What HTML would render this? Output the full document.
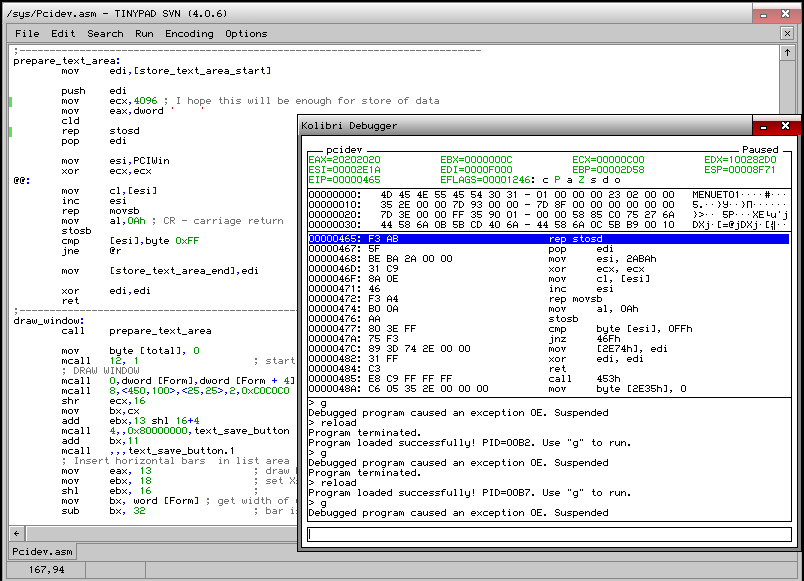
<!DOCTYPE html>
<html><head><meta charset="utf-8">
<style>
*{margin:0;padding:0}
html,body{width:804px;height:581px;overflow:hidden;background:#000}
body{position:relative}
.a{position:absolute}
.tx{position:absolute;white-space:pre;font-family:"Liberation Mono",monospace;font-size:10px;line-height:10px;color:transparent}
</style></head><body>
<div class="a" style="left:2px;top:2px;width:800px;height:579px;background:#c8c8c8"></div><div class="a" style="left:2px;top:2px;width:800px;height:1px;background:#8c8c8c"></div><div class="a" style="left:2px;top:2px;width:1px;height:579px;background:#9a9a9a"></div><div class="a" style="left:801px;top:2px;width:1px;height:579px;background:#a8a8a8"></div><div class="a" style="left:3px;top:3px;width:798px;height:1px;background:#ffffff"></div><div class="a" style="left:3px;top:3px;width:1px;height:578px;background:#d8d8d8"></div><div class="a" style="left:3px;top:4px;width:1px;height:19px;background:linear-gradient(#ffffff,#d4d4d4)"></div><div class="a" style="left:4px;top:4px;width:748px;height:19px;background:linear-gradient(#f4f4f4,#c2c2c2)"></div><div class="a" style="left:752px;top:3px;width:1px;height:20px;background:#888888"></div><div class="a" style="left:753px;top:4px;width:48px;height:5px;background:linear-gradient(#ffffff,#e8d4d4)"></div><div class="a" style="left:753px;top:9px;width:48px;height:14px;background:linear-gradient(#b87878,#e07e7e)"></div><div class="a" style="left:801px;top:2px;width:1px;height:21px;background:#7c7c7c"></div><div class="a" style="left:800px;top:3px;width:1px;height:6px;background:#f8f0f0"></div><div class="a" style="left:6px;top:23px;width:795px;height:1px;background:#888888"></div><div class="a" style="left:2px;top:23px;width:4px;height:1px;background:#c4c4c4"></div><div class="a" style="left:6px;top:23px;width:792px;height:1px;background:#888888"></div><div class="a" style="left:6px;top:42px;width:792px;height:1px;background:#888888"></div><div class="a" style="left:6px;top:23px;width:1px;height:20px;background:#888888"></div><div class="a" style="left:797px;top:23px;width:1px;height:20px;background:#888888"></div><div class="a" style="left:780px;top:26px;width:14px;height:1px;background:#888888"></div><div class="a" style="left:780px;top:39px;width:14px;height:1px;background:#888888"></div><div class="a" style="left:780px;top:26px;width:1px;height:14px;background:#888888"></div><div class="a" style="left:793px;top:26px;width:1px;height:14px;background:#888888"></div><div class="a" style="left:781px;top:27px;width:12px;height:1px;background:#ffffff"></div><div class="a" style="left:781px;top:27px;width:1px;height:12px;background:#ffffff"></div><div class="a" style="left:6px;top:42px;width:792px;height:1px;background:#888888"></div><div class="a" style="left:6px;top:561px;width:792px;height:1px;background:#888888"></div><div class="a" style="left:6px;top:42px;width:1px;height:520px;background:#888888"></div><div class="a" style="left:797px;top:42px;width:1px;height:520px;background:#888888"></div><div class="a" style="left:8px;top:44px;width:788px;height:1px;background:#888888"></div><div class="a" style="left:8px;top:44px;width:1px;height:516px;background:#888888"></div><div class="a" style="left:795px;top:44px;width:1px;height:498px;background:#888888"></div><div class="a" style="left:9px;top:45px;width:770px;height:480px;background:#ffffff"></div><div class="a" style="left:9px;top:97px;width:3px;height:10px;background:#5ee05e"></div><div class="a" style="left:9px;top:127px;width:3px;height:10px;background:#5ee05e"></div><div class="a" style="left:779px;top:45px;width:1px;height:480px;background:#888888"></div><div class="a" style="left:780px;top:45px;width:15px;height:1px;background:#ffffff"></div><div class="a" style="left:780px;top:45px;width:1px;height:15px;background:#ffffff"></div><div class="a" style="left:780px;top:60px;width:15px;height:1px;background:#888888"></div><div class="a" style="left:9px;top:525px;width:786px;height:1px;background:#888888"></div><div class="a" style="left:9px;top:526px;width:15px;height:1px;background:#ffffff"></div><div class="a" style="left:9px;top:526px;width:1px;height:15px;background:#ffffff"></div><div class="a" style="left:24px;top:526px;width:2px;height:15px;background:#888888"></div><div class="a" style="left:26px;top:526px;width:753px;height:1px;background:#ffffff"></div><div class="a" style="left:26px;top:526px;width:1px;height:15px;background:#ffffff"></div><div class="a" style="left:9px;top:541px;width:787px;height:1px;background:#888888"></div><div class="a" style="left:76px;top:543px;width:722px;height:1px;background:#888888"></div><div class="a" style="left:76px;top:543px;width:1px;height:17px;background:#888888"></div><div class="a" style="left:8px;top:559px;width:69px;height:1px;background:#888888"></div><div class="a" style="left:6px;top:561px;width:792px;height:1px;background:#888888"></div><div class="a" style="left:6px;top:578px;width:792px;height:1px;background:#888888"></div><div class="a" style="left:6px;top:561px;width:1px;height:18px;background:#888888"></div><div class="a" style="left:797px;top:561px;width:1px;height:18px;background:#888888"></div><div class="a" style="left:85px;top:561px;width:1px;height:18px;background:#888888"></div><div class="a" style="left:145px;top:561px;width:1px;height:18px;background:#888888"></div><svg class="a" style="left:0;top:0" width="804" height="581" shape-rendering="crispEdges"><path fill="#5e6a6a" d="M781 9h4v1h-4zM786 9h4v1h-4zM781 10h1v1h-1zM784 10h1v1h-1zM786 10h1v1h-1zM789 10h1v1h-1zM781 11h1v1h-1zM785 11h1v1h-1zM789 11h1v1h-1zM781 12h2v1h-2zM788 12h2v1h-2zM782 13h2v1h-2zM787 13h2v1h-2zM781 14h2v1h-2zM788 14h2v1h-2zM781 15h1v1h-1zM785 15h1v1h-1zM789 15h1v1h-1zM781 16h1v1h-1zM784 16h1v1h-1zM786 16h1v1h-1zM789 16h1v1h-1zM781 17h4v1h-4zM786 17h4v1h-4z"/><path fill="#ffffff" d="M782 10h2v1h-2zM787 10h2v1h-2zM782 11h3v1h-3zM786 11h3v1h-3zM783 12h5v1h-5zM784 13h3v1h-3zM783 14h5v1h-5zM782 15h3v1h-3zM786 15h3v1h-3zM782 16h2v1h-2zM787 16h2v1h-2z"/><path fill="#5e6a6a" d="M760 14h7v1h-7zM760 15h1v1h-1zM766 15h1v1h-1zM760 16h1v1h-1zM766 16h1v1h-1zM760 17h7v1h-7z"/><path fill="#ffffff" d="M761 15h5v1h-5zM761 16h5v1h-5z"/><path fill="#000" d="M785 31h1v1h-1zM789 31h1v1h-1zM786 32h1v1h-1zM788 32h1v1h-1zM787 33h1v1h-1zM786 34h1v1h-1zM788 34h1v1h-1zM785 35h1v1h-1zM789 35h1v1h-1z"/><path fill="#000" d="M787 49h1v1h-1zM786 50h3v1h-3zM785 51h1v1h-1zM787 51h1v1h-1zM789 51h1v1h-1zM787 52h1v1h-1zM787 53h1v1h-1zM787 54h1v1h-1zM787 55h1v1h-1z"/><path fill="#000" d="M16 531h1v1h-1zM15 532h1v1h-1zM14 533h5v1h-5zM15 534h1v1h-1zM16 535h1v1h-1z"/></svg>
<div class="tx" style="left:7px;top:9px">/sys/Pcidev.asm - TINYPAD SVN (4.0.6)</div><div class="tx" style="left:16px;top:29px">File  Edit  Search  Run  Encoding  Options</div><div class="tx" style="left:14px;top:46px">;-----------------------------------------------------------------------------
prepare_text_area:
        mov     edi,[store_text_area_start]

        push    edi
        mov     ecx,4096 ; I hope this will be enough for store of data
        mov     eax,dword '    '
        cld
        rep     stosd
        pop     edi

        mov     esi,PCIWin
        xor     ecx,ecx
@@:
        mov     cl,[esi]
        inc     esi
        rep     movsb
        mov     al,0Ah ; CR - carriage return
        stosb
        cmp     [esi],byte 0xFF
        jne     @r

        mov     [store_text_area_end],edi

        xor     edi,edi
        ret
;-----------------------------------------------------------------------------
draw_window:
        call    prepare_text_area

        mov     byte [total], 0
        mcall   12, 1                   ; start
        ; DRAW WINDOW
        mcall   0,dword [Form],dword [Form + 4]
        mcall   8,&lt;450,100&gt;,&lt;25,25&gt;,2,0xC0C0C0
        shr     ecx,16
        mov     bx,cx
        add     ebx,13 shl 16+4
        mcall   4,,0x80000000,text_save_button
        add     bx,11
        mcall   ,,,text_save_button.1
        ; Insert horizontal bars  in list area
        mov     eax, 13                 ; draw b
        mov     ebx, 18                 ; set Xs
        shl     ebx, 16                 ;
        mov     bx, word [Form] ; get width of w
        sub     bx, 32                  ; bar is</div><div class="tx" style="left:13px;top:547px">Pcidev.asm</div><div class="tx" style="left:29px;top:565px">167,94</div><svg class="a" style="left:0;top:0" width="804" height="581" shape-rendering="crispEdges"><defs><path id="g0" d="M4 0h1v1h-1zM3 1h1v1h-1zM3 2h1v1h-1zM2 3h1v1h-1zM1 4h1v1h-1zM1 5h1v1h-1zM0 6h1v1h-1z"/><path id="g1" d="M1 2h4v1h-4zM0 3h1v1h-1zM1 4h3v1h-3zM4 5h1v1h-1zM0 6h4v1h-4z"/><path id="g2" d="M0 2h1v1h-1zM4 2h1v1h-1zM0 3h1v1h-1zM4 3h1v1h-1zM0 4h1v1h-1zM4 4h1v1h-1zM0 5h1v1h-1zM4 5h1v1h-1zM1 6h4v1h-4zM4 7h1v1h-1zM1 8h3v1h-3z"/><path id="g3" d="M0 0h4v1h-4zM0 1h1v1h-1zM4 1h1v1h-1zM0 2h1v1h-1zM4 2h1v1h-1zM0 3h4v1h-4zM0 4h1v1h-1zM0 5h1v1h-1zM0 6h1v1h-1z"/><path id="g4" d="M1 2h4v1h-4zM0 3h1v1h-1zM0 4h1v1h-1zM0 5h1v1h-1zM1 6h4v1h-4z"/><path id="g5" d="M2 0h1v1h-1zM1 2h2v1h-2zM2 3h1v1h-1zM2 4h1v1h-1zM2 5h1v1h-1zM1 6h3v1h-3z"/><path id="g6" d="M4 0h1v1h-1zM4 1h1v1h-1zM1 2h4v1h-4zM0 3h1v1h-1zM4 3h1v1h-1zM0 4h1v1h-1zM4 4h1v1h-1zM0 5h1v1h-1zM4 5h1v1h-1zM1 6h4v1h-4z"/><path id="g7" d="M1 2h3v1h-3zM0 3h1v1h-1zM4 3h1v1h-1zM0 4h5v1h-5zM0 5h1v1h-1zM1 6h3v1h-3z"/><path id="g8" d="M0 2h2v1h-2zM3 2h2v1h-2zM1 3h1v1h-1zM3 3h1v1h-1zM1 4h1v1h-1zM3 4h1v1h-1zM2 5h1v1h-1zM2 6h1v1h-1z"/><path id="g9" d="M1 5h2v1h-2zM1 6h2v1h-2z"/><path id="g10" d="M1 2h3v1h-3zM4 3h1v1h-1zM1 4h4v1h-4zM0 5h1v1h-1zM4 5h1v1h-1zM1 6h4v1h-4z"/><path id="g11" d="M0 2h2v1h-2zM3 2h1v1h-1zM0 3h1v1h-1zM2 3h1v1h-1zM4 3h1v1h-1zM0 4h1v1h-1zM2 4h1v1h-1zM4 4h1v1h-1zM0 5h1v1h-1zM2 5h1v1h-1zM4 5h1v1h-1zM0 6h1v1h-1zM4 6h1v1h-1z"/><path id="g12" d="M0 3h5v1h-5z"/><path id="g13" d="M0 0h5v1h-5zM2 1h1v1h-1zM2 2h1v1h-1zM2 3h1v1h-1zM2 4h1v1h-1zM2 5h1v1h-1zM2 6h1v1h-1z"/><path id="g14" d="M1 0h3v1h-3zM2 1h1v1h-1zM2 2h1v1h-1zM2 3h1v1h-1zM2 4h1v1h-1zM2 5h1v1h-1zM1 6h3v1h-3z"/><path id="g15" d="M0 0h1v1h-1zM4 0h1v1h-1zM0 1h2v1h-2zM4 1h1v1h-1zM0 2h2v1h-2zM4 2h1v1h-1zM0 3h1v1h-1zM2 3h1v1h-1zM4 3h1v1h-1zM0 4h1v1h-1zM3 4h2v1h-2zM0 5h1v1h-1zM3 5h2v1h-2zM0 6h1v1h-1zM4 6h1v1h-1z"/><path id="g16" d="M0 0h1v1h-1zM4 0h1v1h-1zM0 1h1v1h-1zM4 1h1v1h-1zM1 2h1v1h-1zM3 2h1v1h-1zM2 3h1v1h-1zM2 4h1v1h-1zM2 5h1v1h-1zM2 6h1v1h-1z"/><path id="g17" d="M2 0h1v1h-1zM1 1h1v1h-1zM3 1h1v1h-1zM0 2h1v1h-1zM4 2h1v1h-1zM0 3h1v1h-1zM4 3h1v1h-1zM0 4h5v1h-5zM0 5h1v1h-1zM4 5h1v1h-1zM0 6h1v1h-1zM4 6h1v1h-1z"/><path id="g18" d="M0 0h3v1h-3zM0 1h1v1h-1zM3 1h1v1h-1zM0 2h1v1h-1zM4 2h1v1h-1zM0 3h1v1h-1zM4 3h1v1h-1zM0 4h1v1h-1zM4 4h1v1h-1zM0 5h1v1h-1zM3 5h1v1h-1zM0 6h3v1h-3z"/><path id="g19" d="M1 0h3v1h-3zM0 1h1v1h-1zM4 1h1v1h-1zM0 2h1v1h-1zM1 3h3v1h-3zM4 4h1v1h-1zM0 5h1v1h-1zM4 5h1v1h-1zM1 6h3v1h-3z"/><path id="g20" d="M0 0h1v1h-1zM4 0h1v1h-1zM0 1h1v1h-1zM4 1h1v1h-1zM1 2h1v1h-1zM3 2h1v1h-1zM1 3h1v1h-1zM3 3h1v1h-1zM1 4h1v1h-1zM3 4h1v1h-1zM2 5h1v1h-1zM2 6h1v1h-1z"/><path id="g21" d="M3 0h1v1h-1zM2 1h1v1h-1zM2 2h1v1h-1zM2 3h1v1h-1zM2 4h1v1h-1zM2 5h1v1h-1zM3 6h1v1h-1z"/><path id="g22" d="M3 0h1v1h-1zM2 1h2v1h-2zM1 2h1v1h-1zM3 2h1v1h-1zM1 3h1v1h-1zM3 3h1v1h-1zM0 4h5v1h-5zM3 5h1v1h-1zM2 6h3v1h-3z"/><path id="g23" d="M1 0h3v1h-3zM0 1h1v1h-1zM4 1h1v1h-1zM0 2h1v1h-1zM4 2h1v1h-1zM0 3h1v1h-1zM4 3h1v1h-1zM0 4h1v1h-1zM4 4h1v1h-1zM0 5h1v1h-1zM4 5h1v1h-1zM1 6h3v1h-3z"/><path id="g24" d="M2 0h2v1h-2zM1 1h1v1h-1zM0 2h1v1h-1zM0 3h4v1h-4zM0 4h1v1h-1zM4 4h1v1h-1zM0 5h1v1h-1zM4 5h1v1h-1zM1 6h3v1h-3z"/><path id="g25" d="M1 0h1v1h-1zM2 1h1v1h-1zM2 2h1v1h-1zM2 3h1v1h-1zM2 4h1v1h-1zM2 5h1v1h-1zM1 6h1v1h-1z"/><path id="g26" d="M0 0h5v1h-5zM0 1h1v1h-1zM0 2h1v1h-1zM0 3h4v1h-4zM0 4h1v1h-1zM0 5h1v1h-1zM0 6h1v1h-1z"/><path id="g27" d="M1 0h2v1h-2zM2 1h1v1h-1zM2 2h1v1h-1zM2 3h1v1h-1zM2 4h1v1h-1zM2 5h1v1h-1zM1 6h3v1h-3z"/><path id="g28" d="M0 0h5v1h-5zM0 1h1v1h-1zM0 2h1v1h-1zM0 3h4v1h-4zM0 4h1v1h-1zM0 5h1v1h-1zM0 6h5v1h-5z"/><path id="g29" d="M2 0h1v1h-1zM2 1h1v1h-1zM1 2h3v1h-3zM2 3h1v1h-1zM2 4h1v1h-1zM2 5h1v1h-1zM3 6h2v1h-2z"/><path id="g30" d="M1 2h1v1h-1zM3 2h2v1h-2zM1 3h2v1h-2zM1 4h1v1h-1zM1 5h1v1h-1zM1 6h1v1h-1z"/><path id="g31" d="M0 0h1v1h-1zM0 1h1v1h-1zM0 2h4v1h-4zM0 3h1v1h-1zM4 3h1v1h-1zM0 4h1v1h-1zM4 4h1v1h-1zM0 5h1v1h-1zM4 5h1v1h-1zM0 6h1v1h-1zM4 6h1v1h-1z"/><path id="g32" d="M0 0h4v1h-4zM0 1h1v1h-1zM4 1h1v1h-1zM0 2h1v1h-1zM4 2h1v1h-1zM0 3h4v1h-4zM0 4h1v1h-1zM2 4h1v1h-1zM0 5h1v1h-1zM3 5h1v1h-1zM0 6h1v1h-1zM4 6h1v1h-1z"/><path id="g33" d="M0 2h1v1h-1zM4 2h1v1h-1zM0 3h1v1h-1zM4 3h1v1h-1zM0 4h1v1h-1zM4 4h1v1h-1zM0 5h1v1h-1zM3 5h2v1h-2zM1 6h2v1h-2zM4 6h1v1h-1z"/><path id="g34" d="M0 2h1v1h-1zM2 2h2v1h-2zM0 3h2v1h-2zM4 3h1v1h-1zM0 4h1v1h-1zM4 4h1v1h-1zM0 5h1v1h-1zM4 5h1v1h-1zM0 6h1v1h-1zM4 6h1v1h-1z"/><path id="g35" d="M1 2h3v1h-3zM0 3h1v1h-1zM4 3h1v1h-1zM0 4h1v1h-1zM4 4h1v1h-1zM0 5h1v1h-1zM4 5h1v1h-1zM1 6h3v1h-3z"/><path id="g36" d="M1 2h4v1h-4zM0 3h1v1h-1zM4 3h1v1h-1zM0 4h1v1h-1zM4 4h1v1h-1zM0 5h1v1h-1zM4 5h1v1h-1zM1 6h4v1h-4zM4 7h1v1h-1zM1 8h3v1h-3z"/><path id="g37" d="M1 0h3v1h-3zM0 1h1v1h-1zM4 1h1v1h-1zM0 2h1v1h-1zM4 2h1v1h-1zM0 3h1v1h-1zM4 3h1v1h-1zM0 4h1v1h-1zM4 4h1v1h-1zM0 5h1v1h-1zM4 5h1v1h-1zM1 6h3v1h-3z"/><path id="g38" d="M0 2h4v1h-4zM0 3h1v1h-1zM4 3h1v1h-1zM0 4h1v1h-1zM4 4h1v1h-1zM0 5h1v1h-1zM4 5h1v1h-1zM0 6h4v1h-4zM0 7h1v1h-1zM0 8h1v1h-1z"/><path id="g39" d="M1 1h2v1h-2zM1 2h2v1h-2zM1 5h2v1h-2zM2 6h1v1h-1zM1 7h1v1h-1z"/><path id="g40" d="M0 7h5v1h-5z"/><path id="g41" d="M0 2h1v1h-1zM4 2h1v1h-1zM1 3h1v1h-1zM3 3h1v1h-1zM2 4h1v1h-1zM1 5h1v1h-1zM3 5h1v1h-1zM0 6h1v1h-1zM4 6h1v1h-1z"/><path id="g42" d="M1 1h2v1h-2zM1 2h2v1h-2zM1 5h2v1h-2zM1 6h2v1h-2z"/><path id="g43" d="M1 5h2v1h-2zM2 6h1v1h-1zM1 7h1v1h-1z"/><path id="g44" d="M1 0h3v1h-3zM1 1h1v1h-1zM1 2h1v1h-1zM1 3h1v1h-1zM1 4h1v1h-1zM1 5h1v1h-1zM1 6h3v1h-3z"/><path id="g45" d="M1 0h3v1h-3zM3 1h1v1h-1zM3 2h1v1h-1zM3 3h1v1h-1zM3 4h1v1h-1zM3 5h1v1h-1zM1 6h3v1h-3z"/><path id="g46" d="M1 0h3v1h-3zM0 1h1v1h-1zM4 1h1v1h-1zM0 2h1v1h-1zM4 2h1v1h-1zM1 3h4v1h-4zM4 4h1v1h-1zM3 5h1v1h-1zM1 6h2v1h-2z"/><path id="g47" d="M0 2h1v1h-1zM4 2h1v1h-1zM0 3h1v1h-1zM2 3h1v1h-1zM4 3h1v1h-1zM0 4h1v1h-1zM2 4h1v1h-1zM4 4h1v1h-1zM0 5h1v1h-1zM2 5h1v1h-1zM4 5h1v1h-1zM1 6h1v1h-1zM3 6h1v1h-1z"/><path id="g48" d="M0 0h1v1h-1zM0 1h1v1h-1zM0 2h4v1h-4zM0 3h1v1h-1zM4 3h1v1h-1zM0 4h1v1h-1zM4 4h1v1h-1zM0 5h1v1h-1zM4 5h1v1h-1zM0 6h4v1h-4z"/><path id="g49" d="M2 0h3v1h-3zM1 1h1v1h-1zM0 2h4v1h-4zM1 3h1v1h-1zM1 4h1v1h-1zM1 5h1v1h-1zM1 6h1v1h-1z"/><path id="g50" d="M2 0h1v1h-1zM2 1h1v1h-1z"/><path id="g51" d="M1 0h3v1h-3zM0 1h1v1h-1zM4 1h1v1h-1zM0 2h1v1h-1zM0 3h1v1h-1zM0 4h1v1h-1zM0 5h1v1h-1zM4 5h1v1h-1zM1 6h3v1h-3z"/><path id="g52" d="M0 0h1v1h-1zM4 0h1v1h-1zM0 1h1v1h-1zM4 1h1v1h-1zM0 2h1v1h-1zM4 2h1v1h-1zM0 3h1v1h-1zM2 3h1v1h-1zM4 3h1v1h-1zM0 4h1v1h-1zM2 4h1v1h-1zM4 4h1v1h-1zM0 5h1v1h-1zM2 5h1v1h-1zM4 5h1v1h-1zM1 6h1v1h-1zM3 6h1v1h-1z"/><path id="g53" d="M1 0h3v1h-3zM0 1h1v1h-1zM4 1h1v1h-1zM0 2h1v1h-1zM2 2h3v1h-3zM0 3h1v1h-1zM2 3h2v1h-2zM0 4h1v1h-1zM2 4h2v1h-2zM0 5h1v1h-1zM1 6h3v1h-3z"/><path id="g54" d="M3 0h1v1h-1zM2 2h2v1h-2zM3 3h1v1h-1zM3 4h1v1h-1zM3 5h1v1h-1zM3 6h1v1h-1zM3 7h1v1h-1zM0 8h3v1h-3z"/><path id="g55" d="M2 0h1v1h-1zM1 1h2v1h-2zM2 2h1v1h-1zM2 3h1v1h-1zM2 4h1v1h-1zM2 5h1v1h-1zM2 6h1v1h-1z"/><path id="g56" d="M1 0h3v1h-3zM0 1h1v1h-1zM4 1h1v1h-1zM4 2h1v1h-1zM1 3h3v1h-3zM0 4h1v1h-1zM0 5h1v1h-1zM0 6h5v1h-5z"/><path id="g57" d="M2 1h1v1h-1zM2 2h1v1h-1zM0 3h5v1h-5zM2 4h1v1h-1zM2 5h1v1h-1z"/><path id="g58" d="M1 0h3v1h-3zM0 1h1v1h-1zM4 1h1v1h-1zM0 2h1v1h-1zM4 2h1v1h-1zM1 3h3v1h-3zM0 4h1v1h-1zM4 4h1v1h-1zM0 5h1v1h-1zM4 5h1v1h-1zM1 6h3v1h-3z"/><path id="g59" d="M3 1h2v1h-2zM1 2h2v1h-2zM0 3h1v1h-1zM1 4h2v1h-2zM3 5h2v1h-2z"/><path id="g60" d="M0 0h5v1h-5zM0 1h1v1h-1zM0 2h1v1h-1zM0 3h4v1h-4zM4 4h1v1h-1zM0 5h1v1h-1zM4 5h1v1h-1zM1 6h3v1h-3z"/><path id="g61" d="M0 1h2v1h-2zM2 2h2v1h-2zM4 3h1v1h-1zM2 4h2v1h-2zM0 5h2v1h-2z"/><path id="g62" d="M1 0h3v1h-3zM0 1h1v1h-1zM4 1h1v1h-1zM4 2h1v1h-1zM2 3h2v1h-2zM4 4h1v1h-1zM0 5h1v1h-1zM4 5h1v1h-1zM1 6h3v1h-3z"/><path id="g63" d="M0 2h5v1h-5zM3 3h1v1h-1zM2 4h1v1h-1zM1 5h1v1h-1zM0 6h5v1h-5z"/><path id="g64" d="M0 0h1v1h-1zM4 0h1v1h-1zM0 1h1v1h-1zM4 1h1v1h-1zM1 2h1v1h-1zM3 2h1v1h-1zM2 3h1v1h-1zM1 4h1v1h-1zM3 4h1v1h-1zM0 5h1v1h-1zM4 5h1v1h-1zM0 6h1v1h-1zM4 6h1v1h-1z"/><path id="g65" d="M0 0h5v1h-5zM4 1h1v1h-1zM3 2h1v1h-1zM2 3h1v1h-1zM1 4h1v1h-1zM1 5h1v1h-1zM1 6h1v1h-1z"/><path id="g66" d="M0 0h1v1h-1zM4 0h1v1h-1zM0 1h1v1h-1zM3 1h1v1h-1zM0 2h1v1h-1zM2 2h1v1h-1zM0 3h2v1h-2zM0 4h1v1h-1zM2 4h1v1h-1zM0 5h1v1h-1zM3 5h1v1h-1zM0 6h1v1h-1zM4 6h1v1h-1z"/><path id="g67" d="M0 2h5v1h-5zM0 4h5v1h-5z"/><path id="g68" d="M0 0h4v1h-4zM0 1h1v1h-1zM4 1h1v1h-1zM0 2h1v1h-1zM4 2h1v1h-1zM0 3h4v1h-4zM0 4h1v1h-1zM4 4h1v1h-1zM0 5h1v1h-1zM4 5h1v1h-1zM0 6h4v1h-4z"/><path id="g69" d="M0 0h1v1h-1zM0 1h1v1h-1zM0 2h1v1h-1zM0 3h1v1h-1zM0 4h1v1h-1zM0 5h1v1h-1zM0 6h5v1h-5z"/><path id="g70" d="M1 0h3v1h-3zM0 1h1v1h-1zM4 1h1v1h-1zM0 2h1v1h-1zM0 3h1v1h-1zM2 3h3v1h-3zM0 4h1v1h-1zM4 4h1v1h-1zM0 5h1v1h-1zM4 5h1v1h-1zM1 6h4v1h-4z"/><path id="g71" d="M0 0h5v1h-5zM4 1h1v1h-1zM3 2h1v1h-1zM2 3h1v1h-1zM1 4h1v1h-1zM0 5h1v1h-1zM0 6h5v1h-5z"/><path id="g72" d="M0 0h1v1h-1zM4 0h1v1h-1zM0 1h2v1h-2zM3 1h2v1h-2zM0 2h1v1h-1zM2 2h1v1h-1zM4 2h1v1h-1zM0 3h1v1h-1zM2 3h1v1h-1zM4 3h1v1h-1zM0 4h1v1h-1zM4 4h1v1h-1zM0 5h1v1h-1zM4 5h1v1h-1zM0 6h1v1h-1zM4 6h1v1h-1z"/><path id="g73" d="M0 0h1v1h-1zM4 0h1v1h-1zM0 1h1v1h-1zM4 1h1v1h-1zM0 2h1v1h-1zM4 2h1v1h-1zM0 3h1v1h-1zM4 3h1v1h-1zM0 4h1v1h-1zM4 4h1v1h-1zM0 5h1v1h-1zM4 5h1v1h-1zM1 6h3v1h-3z"/><path id="g74" d="M1 3h1v1h-1z"/><path id="g75" d="M1 0h1v1h-1zM3 0h1v1h-1zM1 1h1v1h-1zM3 1h1v1h-1zM0 2h5v1h-5zM1 3h1v1h-1zM3 3h1v1h-1zM0 4h5v1h-5zM1 5h1v1h-1zM3 5h1v1h-1zM1 6h1v1h-1zM3 6h1v1h-1z"/><path id="g76" d="M1 0h1v1h-1zM2 1h1v1h-1zM2 2h1v1h-1zM3 3h1v1h-1zM2 4h1v1h-1zM2 5h1v1h-1zM1 6h1v1h-1z"/><path id="g77" d="M0 0h1v1h-1zM4 0h1v1h-1zM0 1h1v1h-1zM4 1h1v1h-1zM0 2h1v1h-1zM4 2h1v1h-1zM1 3h4v1h-4zM4 4h1v1h-1zM0 5h1v1h-1zM4 5h1v1h-1zM1 6h3v1h-3z"/><path id="g78" d="M0 0h5v1h-5zM0 1h1v1h-1zM4 1h1v1h-1zM0 2h1v1h-1zM4 2h1v1h-1zM0 3h1v1h-1zM4 3h1v1h-1zM0 4h1v1h-1zM4 4h1v1h-1zM0 5h1v1h-1zM4 5h1v1h-1zM0 6h1v1h-1zM4 6h1v1h-1z"/><path id="g79" d="M0 0h4v1h-4zM0 1h1v1h-1zM4 1h1v1h-1zM0 2h1v1h-1zM4 2h1v1h-1zM0 3h4v1h-4zM0 4h1v1h-1zM0 5h1v1h-1zM0 6h1v1h-1z"/><path id="g80" d="M0 0h5v1h-5zM0 1h1v1h-1zM0 2h1v1h-1zM0 3h4v1h-4zM0 4h1v1h-1zM0 5h1v1h-1zM0 6h5v1h-5z"/><path id="g81" d="M2 0h1v1h-1zM2 1h1v1h-1zM2 2h1v1h-1zM2 3h1v1h-1zM2 4h3v1h-3z"/><path id="g82" d="M0 3h5v1h-5zM0 5h5v1h-5z"/><path id="g83" d="M1 0h1v1h-1zM3 0h1v1h-1zM1 1h1v1h-1zM3 1h1v1h-1zM1 2h1v1h-1zM3 2h1v1h-1zM0 3h2v1h-2zM3 3h1v1h-1zM3 4h1v1h-1zM0 5h2v1h-2zM3 5h1v1h-1zM1 6h1v1h-1zM3 6h1v1h-1zM1 7h1v1h-1zM3 7h1v1h-1zM1 8h1v1h-1zM3 8h1v1h-1z"/><path id="g84" d="M2 0h1v1h-1zM2 1h1v1h-1zM2 2h1v1h-1zM2 3h1v1h-1zM2 4h1v1h-1zM2 6h1v1h-1z"/><path id="g85" d="M1 0h1v1h-1zM3 0h1v1h-1zM1 1h1v1h-1zM3 1h1v1h-1z"/></defs><g fill="#000" transform="translate(7 10)"><use href="#g0" x="0"/><use href="#g1" x="6"/><use href="#g2" x="12"/><use href="#g1" x="18"/><use href="#g0" x="24"/><use href="#g3" x="30"/><use href="#g4" x="36"/><use href="#g5" x="42"/><use href="#g6" x="48"/><use href="#g7" x="54"/><use href="#g8" x="60"/><use href="#g9" x="66"/><use href="#g10" x="72"/><use href="#g1" x="78"/><use href="#g11" x="84"/><use href="#g12" x="96"/><use href="#g13" x="108"/><use href="#g14" x="114"/><use href="#g15" x="120"/><use href="#g16" x="126"/><use href="#g3" x="132"/><use href="#g17" x="138"/><use href="#g18" x="144"/><use href="#g19" x="156"/><use href="#g20" x="162"/><use href="#g15" x="168"/><use href="#g21" x="180"/><use href="#g22" x="186"/><use href="#g9" x="192"/><use href="#g23" x="198"/><use href="#g9" x="204"/><use href="#g24" x="210"/><use href="#g25" x="216"/></g><g fill="#000" transform="translate(16 30)"><use href="#g26" x="0"/><use href="#g5" x="6"/><use href="#g27" x="12"/><use href="#g7" x="18"/><use href="#g28" x="36"/><use href="#g6" x="42"/><use href="#g5" x="48"/><use href="#g29" x="54"/><use href="#g19" x="72"/><use href="#g7" x="78"/><use href="#g10" x="84"/><use href="#g30" x="90"/><use href="#g4" x="96"/><use href="#g31" x="102"/><use href="#g32" x="120"/><use href="#g33" x="126"/><use href="#g34" x="132"/><use href="#g28" x="150"/><use href="#g34" x="156"/><use href="#g4" x="162"/><use href="#g35" x="168"/><use href="#g6" x="174"/><use href="#g5" x="180"/><use href="#g34" x="186"/><use href="#g36" x="192"/><use href="#g37" x="210"/><use href="#g38" x="216"/><use href="#g29" x="222"/><use href="#g5" x="228"/><use href="#g35" x="234"/><use href="#g34" x="240"/><use href="#g1" x="246"/></g><g fill="#000" transform="translate(14 47)"><use href="#g39" x="0" fill="#747474"/><use href="#g12" x="6" fill="#747474"/><use href="#g12" x="12" fill="#747474"/><use href="#g12" x="18" fill="#747474"/><use href="#g12" x="24" fill="#747474"/><use href="#g12" x="30" fill="#747474"/><use href="#g12" x="36" fill="#747474"/><use href="#g12" x="42" fill="#747474"/><use href="#g12" x="48" fill="#747474"/><use href="#g12" x="54" fill="#747474"/><use href="#g12" x="60" fill="#747474"/><use href="#g12" x="66" fill="#747474"/><use href="#g12" x="72" fill="#747474"/><use href="#g12" x="78" fill="#747474"/><use href="#g12" x="84" fill="#747474"/><use href="#g12" x="90" fill="#747474"/><use href="#g12" x="96" fill="#747474"/><use href="#g12" x="102" fill="#747474"/><use href="#g12" x="108" fill="#747474"/><use href="#g12" x="114" fill="#747474"/><use href="#g12" x="120" fill="#747474"/><use href="#g12" x="126" fill="#747474"/><use href="#g12" x="132" fill="#747474"/><use href="#g12" x="138" fill="#747474"/><use href="#g12" x="144" fill="#747474"/><use href="#g12" x="150" fill="#747474"/><use href="#g12" x="156" fill="#747474"/><use href="#g12" x="162" fill="#747474"/><use href="#g12" x="168" fill="#747474"/><use href="#g12" x="174" fill="#747474"/><use href="#g12" x="180" fill="#747474"/><use href="#g12" x="186" fill="#747474"/><use href="#g12" x="192" fill="#747474"/><use href="#g12" x="198" fill="#747474"/><use href="#g12" x="204" fill="#747474"/><use href="#g12" x="210" fill="#747474"/><use href="#g12" x="216" fill="#747474"/><use href="#g12" x="222" fill="#747474"/><use href="#g12" x="228" fill="#747474"/><use href="#g12" x="234" fill="#747474"/><use href="#g12" x="240" fill="#747474"/><use href="#g12" x="246" fill="#747474"/><use href="#g12" x="252" fill="#747474"/><use href="#g12" x="258" fill="#747474"/><use href="#g12" x="264" fill="#747474"/><use href="#g12" x="270" fill="#747474"/><use href="#g12" x="276" fill="#747474"/><use href="#g12" x="282" fill="#747474"/><use href="#g12" x="288" fill="#747474"/><use href="#g12" x="294" fill="#747474"/><use href="#g12" x="300" fill="#747474"/><use href="#g12" x="306" fill="#747474"/><use href="#g12" x="312" fill="#747474"/><use href="#g12" x="318" fill="#747474"/><use href="#g12" x="324" fill="#747474"/><use href="#g12" x="330" fill="#747474"/><use href="#g12" x="336" fill="#747474"/><use href="#g12" x="342" fill="#747474"/><use href="#g12" x="348" fill="#747474"/><use href="#g12" x="354" fill="#747474"/><use href="#g12" x="360" fill="#747474"/><use href="#g12" x="366" fill="#747474"/><use href="#g12" x="372" fill="#747474"/><use href="#g12" x="378" fill="#747474"/><use href="#g12" x="384" fill="#747474"/><use href="#g12" x="390" fill="#747474"/><use href="#g12" x="396" fill="#747474"/><use href="#g12" x="402" fill="#747474"/><use href="#g12" x="408" fill="#747474"/><use href="#g12" x="414" fill="#747474"/><use href="#g12" x="420" fill="#747474"/><use href="#g12" x="426" fill="#747474"/><use href="#g12" x="432" fill="#747474"/><use href="#g12" x="438" fill="#747474"/><use href="#g12" x="444" fill="#747474"/><use href="#g12" x="450" fill="#747474"/><use href="#g12" x="456" fill="#747474"/><use href="#g12" x="462" fill="#747474"/><use href="#g38" x="0" y="10"/><use href="#g30" x="6" y="10"/><use href="#g7" x="12" y="10"/><use href="#g38" x="18" y="10"/><use href="#g10" x="24" y="10"/><use href="#g30" x="30" y="10"/><use href="#g7" x="36" y="10"/><use href="#g40" x="42" y="10"/><use href="#g29" x="48" y="10"/><use href="#g7" x="54" y="10"/><use href="#g41" x="60" y="10"/><use href="#g29" x="66" y="10"/><use href="#g40" x="72" y="10"/><use href="#g10" x="78" y="10"/><use href="#g30" x="84" y="10"/><use href="#g7" x="90" y="10"/><use href="#g10" x="96" y="10"/><use href="#g42" x="102" y="10" fill="#0000f0"/><use href="#g11" x="48" y="20"/><use href="#g35" x="54" y="20"/><use href="#g8" x="60" y="20"/><use href="#g7" x="96" y="20"/><use href="#g6" x="102" y="20"/><use href="#g5" x="108" y="20"/><use href="#g43" x="114" y="20" fill="#0000f0"/><use href="#g44" x="120" y="20" fill="#0000f0"/><use href="#g1" x="126" y="20"/><use href="#g29" x="132" y="20"/><use href="#g35" x="138" y="20"/><use href="#g30" x="144" y="20"/><use href="#g7" x="150" y="20"/><use href="#g40" x="156" y="20"/><use href="#g29" x="162" y="20"/><use href="#g7" x="168" y="20"/><use href="#g41" x="174" y="20"/><use href="#g29" x="180" y="20"/><use href="#g40" x="186" y="20"/><use href="#g10" x="192" y="20"/><use href="#g30" x="198" y="20"/><use href="#g7" x="204" y="20"/><use href="#g10" x="210" y="20"/><use href="#g40" x="216" y="20"/><use href="#g1" x="222" y="20"/><use href="#g29" x="228" y="20"/><use href="#g10" x="234" y="20"/><use href="#g30" x="240" y="20"/><use href="#g29" x="246" y="20"/><use href="#g45" x="252" y="20" fill="#0000f0"/><use href="#g38" x="48" y="40"/><use href="#g33" x="54" y="40"/><use href="#g1" x="60" y="40"/><use href="#g31" x="66" y="40"/><use href="#g7" x="96" y="40"/><use href="#g6" x="102" y="40"/><use href="#g5" x="108" y="40"/><use href="#g11" x="48" y="50"/><use href="#g35" x="54" y="50"/><use href="#g8" x="60" y="50"/><use href="#g7" x="96" y="50"/><use href="#g4" x="102" y="50"/><use href="#g41" x="108" y="50"/><use href="#g43" x="114" y="50" fill="#0000f0"/><use href="#g22" x="120" y="50" fill="#009000"/><use href="#g23" x="126" y="50" fill="#009000"/><use href="#g46" x="132" y="50" fill="#009000"/><use href="#g24" x="138" y="50" fill="#009000"/><use href="#g39" x="150" y="50" fill="#747474"/><use href="#g14" x="162" y="50" fill="#747474"/><use href="#g31" x="174" y="50" fill="#747474"/><use href="#g35" x="180" y="50" fill="#747474"/><use href="#g38" x="186" y="50" fill="#747474"/><use href="#g7" x="192" y="50" fill="#747474"/><use href="#g29" x="204" y="50" fill="#747474"/><use href="#g31" x="210" y="50" fill="#747474"/><use href="#g5" x="216" y="50" fill="#747474"/><use href="#g1" x="222" y="50" fill="#747474"/><use href="#g47" x="234" y="50" fill="#747474"/><use href="#g5" x="240" y="50" fill="#747474"/><use href="#g27" x="246" y="50" fill="#747474"/><use href="#g27" x="252" y="50" fill="#747474"/><use href="#g48" x="264" y="50" fill="#747474"/><use href="#g7" x="270" y="50" fill="#747474"/><use href="#g7" x="282" y="50" fill="#747474"/><use href="#g34" x="288" y="50" fill="#747474"/><use href="#g35" x="294" y="50" fill="#747474"/><use href="#g33" x="300" y="50" fill="#747474"/><use href="#g36" x="306" y="50" fill="#747474"/><use href="#g31" x="312" y="50" fill="#747474"/><use href="#g49" x="324" y="50" fill="#747474"/><use href="#g35" x="330" y="50" fill="#747474"/><use href="#g30" x="336" y="50" fill="#747474"/><use href="#g1" x="348" y="50" fill="#747474"/><use href="#g29" x="354" y="50" fill="#747474"/><use href="#g35" x="360" y="50" fill="#747474"/><use href="#g30" x="366" y="50" fill="#747474"/><use href="#g7" x="372" y="50" fill="#747474"/><use href="#g35" x="384" y="50" fill="#747474"/><use href="#g49" x="390" y="50" fill="#747474"/><use href="#g6" x="402" y="50" fill="#747474"/><use href="#g10" x="408" y="50" fill="#747474"/><use href="#g29" x="414" y="50" fill="#747474"/><use href="#g10" x="420" y="50" fill="#747474"/><use href="#g11" x="48" y="60"/><use href="#g35" x="54" y="60"/><use href="#g8" x="60" y="60"/><use href="#g7" x="96" y="60"/><use href="#g10" x="102" y="60"/><use href="#g41" x="108" y="60"/><use href="#g43" x="114" y="60" fill="#0000f0"/><use href="#g6" x="120" y="60"/><use href="#g47" x="126" y="60"/><use href="#g35" x="132" y="60"/><use href="#g30" x="138" y="60"/><use href="#g6" x="144" y="60"/><use href="#g50" x="156" y="60" fill="#c00000"/><use href="#g50" x="186" y="60" fill="#c00000"/><use href="#g4" x="48" y="70"/><use href="#g27" x="54" y="70"/><use href="#g6" x="60" y="70"/><use href="#g30" x="48" y="80"/><use href="#g7" x="54" y="80"/><use href="#g38" x="60" y="80"/><use href="#g1" x="96" y="80"/><use href="#g29" x="102" y="80"/><use href="#g35" x="108" y="80"/><use href="#g1" x="114" y="80"/><use href="#g6" x="120" y="80"/><use href="#g38" x="48" y="90"/><use href="#g35" x="54" y="90"/><use href="#g38" x="60" y="90"/><use href="#g7" x="96" y="90"/><use href="#g6" x="102" y="90"/><use href="#g5" x="108" y="90"/><use href="#g11" x="48" y="110"/><use href="#g35" x="54" y="110"/><use href="#g8" x="60" y="110"/><use href="#g7" x="96" y="110"/><use href="#g1" x="102" y="110"/><use href="#g5" x="108" y="110"/><use href="#g43" x="114" y="110" fill="#0000f0"/><use href="#g3" x="120" y="110"/><use href="#g51" x="126" y="110"/><use href="#g14" x="132" y="110"/><use href="#g52" x="138" y="110"/><use href="#g5" x="144" y="110"/><use href="#g34" x="150" y="110"/><use href="#g41" x="48" y="120"/><use href="#g35" x="54" y="120"/><use href="#g30" x="60" y="120"/><use href="#g7" x="96" y="120"/><use href="#g4" x="102" y="120"/><use href="#g41" x="108" y="120"/><use href="#g43" x="114" y="120" fill="#0000f0"/><use href="#g7" x="120" y="120"/><use href="#g4" x="126" y="120"/><use href="#g41" x="132" y="120"/><use href="#g53" x="0" y="130"/><use href="#g53" x="6" y="130"/><use href="#g42" x="12" y="130" fill="#0000f0"/><use href="#g11" x="48" y="140"/><use href="#g35" x="54" y="140"/><use href="#g8" x="60" y="140"/><use href="#g4" x="96" y="140"/><use href="#g27" x="102" y="140"/><use href="#g43" x="108" y="140" fill="#0000f0"/><use href="#g44" x="114" y="140" fill="#0000f0"/><use href="#g7" x="120" y="140"/><use href="#g1" x="126" y="140"/><use href="#g5" x="132" y="140"/><use href="#g45" x="138" y="140" fill="#0000f0"/><use href="#g5" x="48" y="150"/><use href="#g34" x="54" y="150"/><use href="#g4" x="60" y="150"/><use href="#g7" x="96" y="150"/><use href="#g1" x="102" y="150"/><use href="#g5" x="108" y="150"/><use href="#g30" x="48" y="160"/><use href="#g7" x="54" y="160"/><use href="#g38" x="60" y="160"/><use href="#g11" x="96" y="160"/><use href="#g35" x="102" y="160"/><use href="#g8" x="108" y="160"/><use href="#g1" x="114" y="160"/><use href="#g48" x="120" y="160"/><use href="#g11" x="48" y="170"/><use href="#g35" x="54" y="170"/><use href="#g8" x="60" y="170"/><use href="#g10" x="96" y="170"/><use href="#g27" x="102" y="170"/><use href="#g43" x="108" y="170" fill="#0000f0"/><use href="#g23" x="114" y="170" fill="#009000"/><use href="#g17" x="120" y="170" fill="#009000"/><use href="#g31" x="126" y="170" fill="#009000"/><use href="#g39" x="138" y="170" fill="#747474"/><use href="#g51" x="150" y="170" fill="#747474"/><use href="#g32" x="156" y="170" fill="#747474"/><use href="#g12" x="168" y="170" fill="#747474"/><use href="#g4" x="180" y="170" fill="#747474"/><use href="#g10" x="186" y="170" fill="#747474"/><use href="#g30" x="192" y="170" fill="#747474"/><use href="#g30" x="198" y="170" fill="#747474"/><use href="#g5" x="204" y="170" fill="#747474"/><use href="#g10" x="210" y="170" fill="#747474"/><use href="#g36" x="216" y="170" fill="#747474"/><use href="#g7" x="222" y="170" fill="#747474"/><use href="#g30" x="234" y="170" fill="#747474"/><use href="#g7" x="240" y="170" fill="#747474"/><use href="#g29" x="246" y="170" fill="#747474"/><use href="#g33" x="252" y="170" fill="#747474"/><use href="#g30" x="258" y="170" fill="#747474"/><use href="#g34" x="264" y="170" fill="#747474"/><use href="#g1" x="48" y="180"/><use href="#g29" x="54" y="180"/><use href="#g35" x="60" y="180"/><use href="#g1" x="66" y="180"/><use href="#g48" x="72" y="180"/><use href="#g4" x="48" y="190"/><use href="#g11" x="54" y="190"/><use href="#g38" x="60" y="190"/><use href="#g44" x="96" y="190" fill="#0000f0"/><use href="#g7" x="102" y="190"/><use href="#g1" x="108" y="190"/><use href="#g5" x="114" y="190"/><use href="#g45" x="120" y="190" fill="#0000f0"/><use href="#g43" x="126" y="190" fill="#0000f0"/><use href="#g48" x="132" y="190"/><use href="#g2" x="138" y="190"/><use href="#g29" x="144" y="190"/><use href="#g7" x="150" y="190"/><use href="#g23" x="162" y="190" fill="#009000"/><use href="#g41" x="168" y="190" fill="#009000"/><use href="#g26" x="174" y="190" fill="#009000"/><use href="#g26" x="180" y="190" fill="#009000"/><use href="#g54" x="48" y="200"/><use href="#g34" x="54" y="200"/><use href="#g7" x="60" y="200"/><use href="#g53" x="96" y="200"/><use href="#g30" x="102" y="200"/><use href="#g11" x="48" y="220"/><use href="#g35" x="54" y="220"/><use href="#g8" x="60" y="220"/><use href="#g44" x="96" y="220" fill="#0000f0"/><use href="#g1" x="102" y="220"/><use href="#g29" x="108" y="220"/><use href="#g35" x="114" y="220"/><use href="#g30" x="120" y="220"/><use href="#g7" x="126" y="220"/><use href="#g40" x="132" y="220"/><use href="#g29" x="138" y="220"/><use href="#g7" x="144" y="220"/><use href="#g41" x="150" y="220"/><use href="#g29" x="156" y="220"/><use href="#g40" x="162" y="220"/><use href="#g10" x="168" y="220"/><use href="#g30" x="174" y="220"/><use href="#g7" x="180" y="220"/><use href="#g10" x="186" y="220"/><use href="#g40" x="192" y="220"/><use href="#g7" x="198" y="220"/><use href="#g34" x="204" y="220"/><use href="#g6" x="210" y="220"/><use href="#g45" x="216" y="220" fill="#0000f0"/><use href="#g43" x="222" y="220" fill="#0000f0"/><use href="#g7" x="228" y="220"/><use href="#g6" x="234" y="220"/><use href="#g5" x="240" y="220"/><use href="#g41" x="48" y="240"/><use href="#g35" x="54" y="240"/><use href="#g30" x="60" y="240"/><use href="#g7" x="96" y="240"/><use href="#g6" x="102" y="240"/><use href="#g5" x="108" y="240"/><use href="#g43" x="114" y="240" fill="#0000f0"/><use href="#g7" x="120" y="240"/><use href="#g6" x="126" y="240"/><use href="#g5" x="132" y="240"/><use href="#g30" x="48" y="250"/><use href="#g7" x="54" y="250"/><use href="#g29" x="60" y="250"/><use href="#g39" x="0" y="260" fill="#747474"/><use href="#g12" x="6" y="260" fill="#747474"/><use href="#g12" x="12" y="260" fill="#747474"/><use href="#g12" x="18" y="260" fill="#747474"/><use href="#g12" x="24" y="260" fill="#747474"/><use href="#g12" x="30" y="260" fill="#747474"/><use href="#g12" x="36" y="260" fill="#747474"/><use href="#g12" x="42" y="260" fill="#747474"/><use href="#g12" x="48" y="260" fill="#747474"/><use href="#g12" x="54" y="260" fill="#747474"/><use href="#g12" x="60" y="260" fill="#747474"/><use href="#g12" x="66" y="260" fill="#747474"/><use href="#g12" x="72" y="260" fill="#747474"/><use href="#g12" x="78" y="260" fill="#747474"/><use href="#g12" x="84" y="260" fill="#747474"/><use href="#g12" x="90" y="260" fill="#747474"/><use href="#g12" x="96" y="260" fill="#747474"/><use href="#g12" x="102" y="260" fill="#747474"/><use href="#g12" x="108" y="260" fill="#747474"/><use href="#g12" x="114" y="260" fill="#747474"/><use href="#g12" x="120" y="260" fill="#747474"/><use href="#g12" x="126" y="260" fill="#747474"/><use href="#g12" x="132" y="260" fill="#747474"/><use href="#g12" x="138" y="260" fill="#747474"/><use href="#g12" x="144" y="260" fill="#747474"/><use href="#g12" x="150" y="260" fill="#747474"/><use href="#g12" x="156" y="260" fill="#747474"/><use href="#g12" x="162" y="260" fill="#747474"/><use href="#g12" x="168" y="260" fill="#747474"/><use href="#g12" x="174" y="260" fill="#747474"/><use href="#g12" x="180" y="260" fill="#747474"/><use href="#g12" x="186" y="260" fill="#747474"/><use href="#g12" x="192" y="260" fill="#747474"/><use href="#g12" x="198" y="260" fill="#747474"/><use href="#g12" x="204" y="260" fill="#747474"/><use href="#g12" x="210" y="260" fill="#747474"/><use href="#g12" x="216" y="260" fill="#747474"/><use href="#g12" x="222" y="260" fill="#747474"/><use href="#g12" x="228" y="260" fill="#747474"/><use href="#g12" x="234" y="260" fill="#747474"/><use href="#g12" x="240" y="260" fill="#747474"/><use href="#g12" x="246" y="260" fill="#747474"/><use href="#g12" x="252" y="260" fill="#747474"/><use href="#g12" x="258" y="260" fill="#747474"/><use href="#g12" x="264" y="260" fill="#747474"/><use href="#g12" x="270" y="260" fill="#747474"/><use href="#g12" x="276" y="260" fill="#747474"/><use href="#g12" x="282" y="260" fill="#747474"/><use href="#g12" x="288" y="260" fill="#747474"/><use href="#g12" x="294" y="260" fill="#747474"/><use href="#g12" x="300" y="260" fill="#747474"/><use href="#g12" x="306" y="260" fill="#747474"/><use href="#g12" x="312" y="260" fill="#747474"/><use href="#g12" x="318" y="260" fill="#747474"/><use href="#g12" x="324" y="260" fill="#747474"/><use href="#g12" x="330" y="260" fill="#747474"/><use href="#g12" x="336" y="260" fill="#747474"/><use href="#g12" x="342" y="260" fill="#747474"/><use href="#g12" x="348" y="260" fill="#747474"/><use href="#g12" x="354" y="260" fill="#747474"/><use href="#g12" x="360" y="260" fill="#747474"/><use href="#g12" x="366" y="260" fill="#747474"/><use href="#g12" x="372" y="260" fill="#747474"/><use href="#g12" x="378" y="260" fill="#747474"/><use href="#g12" x="384" y="260" fill="#747474"/><use href="#g12" x="390" y="260" fill="#747474"/><use href="#g12" x="396" y="260" fill="#747474"/><use href="#g12" x="402" y="260" fill="#747474"/><use href="#g12" x="408" y="260" fill="#747474"/><use href="#g12" x="414" y="260" fill="#747474"/><use href="#g12" x="420" y="260" fill="#747474"/><use href="#g12" x="426" y="260" fill="#747474"/><use href="#g12" x="432" y="260" fill="#747474"/><use href="#g12" x="438" y="260" fill="#747474"/><use href="#g12" x="444" y="260" fill="#747474"/><use href="#g12" x="450" y="260" fill="#747474"/><use href="#g12" x="456" y="260" fill="#747474"/><use href="#g12" x="462" y="260" fill="#747474"/><use href="#g6" x="0" y="270"/><use href="#g30" x="6" y="270"/><use href="#g10" x="12" y="270"/><use href="#g47" x="18" y="270"/><use href="#g40" x="24" y="270"/><use href="#g47" x="30" y="270"/><use href="#g5" x="36" y="270"/><use href="#g34" x="42" y="270"/><use href="#g6" x="48" y="270"/><use href="#g35" x="54" y="270"/><use href="#g47" x="60" y="270"/><use href="#g42" x="66" y="270" fill="#0000f0"/><use href="#g4" x="48" y="280"/><use href="#g10" x="54" y="280"/><use href="#g27" x="60" y="280"/><use href="#g27" x="66" y="280"/><use href="#g38" x="96" y="280"/><use href="#g30" x="102" y="280"/><use href="#g7" x="108" y="280"/><use href="#g38" x="114" y="280"/><use href="#g10" x="120" y="280"/><use href="#g30" x="126" y="280"/><use href="#g7" x="132" y="280"/><use href="#g40" x="138" y="280"/><use href="#g29" x="144" y="280"/><use href="#g7" x="150" y="280"/><use href="#g41" x="156" y="280"/><use href="#g29" x="162" y="280"/><use href="#g40" x="168" y="280"/><use href="#g10" x="174" y="280"/><use href="#g30" x="180" y="280"/><use href="#g7" x="186" y="280"/><use href="#g10" x="192" y="280"/><use href="#g11" x="48" y="300"/><use href="#g35" x="54" y="300"/><use href="#g8" x="60" y="300"/><use href="#g48" x="96" y="300"/><use href="#g2" x="102" y="300"/><use href="#g29" x="108" y="300"/><use href="#g7" x="114" y="300"/><use href="#g44" x="126" y="300" fill="#0000f0"/><use href="#g29" x="132" y="300"/><use href="#g35" x="138" y="300"/><use href="#g29" x="144" y="300"/><use href="#g10" x="150" y="300"/><use href="#g27" x="156" y="300"/><use href="#g45" x="162" y="300" fill="#0000f0"/><use href="#g43" x="168" y="300" fill="#0000f0"/><use href="#g23" x="180" y="300" fill="#009000"/><use href="#g11" x="48" y="310"/><use href="#g4" x="54" y="310"/><use href="#g10" x="60" y="310"/><use href="#g27" x="66" y="310"/><use href="#g27" x="72" y="310"/><use href="#g55" x="96" y="310" fill="#009000"/><use href="#g56" x="102" y="310" fill="#009000"/><use href="#g43" x="108" y="310" fill="#0000f0"/><use href="#g55" x="120" y="310" fill="#009000"/><use href="#g39" x="240" y="310" fill="#747474"/><use href="#g1" x="252" y="310" fill="#747474"/><use href="#g29" x="258" y="310" fill="#747474"/><use href="#g10" x="264" y="310" fill="#747474"/><use href="#g30" x="270" y="310" fill="#747474"/><use href="#g29" x="276" y="310" fill="#747474"/><use href="#g39" x="48" y="320" fill="#747474"/><use href="#g18" x="60" y="320" fill="#747474"/><use href="#g32" x="66" y="320" fill="#747474"/><use href="#g17" x="72" y="320" fill="#747474"/><use href="#g52" x="78" y="320" fill="#747474"/><use href="#g52" x="90" y="320" fill="#747474"/><use href="#g14" x="96" y="320" fill="#747474"/><use href="#g15" x="102" y="320" fill="#747474"/><use href="#g18" x="108" y="320" fill="#747474"/><use href="#g37" x="114" y="320" fill="#747474"/><use href="#g52" x="120" y="320" fill="#747474"/><use href="#g11" x="48" y="330"/><use href="#g4" x="54" y="330"/><use href="#g10" x="60" y="330"/><use href="#g27" x="66" y="330"/><use href="#g27" x="72" y="330"/><use href="#g23" x="96" y="330" fill="#009000"/><use href="#g43" x="102" y="330" fill="#0000f0"/><use href="#g6" x="108" y="330"/><use href="#g47" x="114" y="330"/><use href="#g35" x="120" y="330"/><use href="#g30" x="126" y="330"/><use href="#g6" x="132" y="330"/><use href="#g44" x="144" y="330" fill="#0000f0"/><use href="#g26" x="150" y="330"/><use href="#g35" x="156" y="330"/><use href="#g30" x="162" y="330"/><use href="#g11" x="168" y="330"/><use href="#g45" x="174" y="330" fill="#0000f0"/><use href="#g43" x="180" y="330" fill="#0000f0"/><use href="#g6" x="186" y="330"/><use href="#g47" x="192" y="330"/><use href="#g35" x="198" y="330"/><use href="#g30" x="204" y="330"/><use href="#g6" x="210" y="330"/><use href="#g44" x="222" y="330" fill="#0000f0"/><use href="#g26" x="228" y="330"/><use href="#g35" x="234" y="330"/><use href="#g30" x="240" y="330"/><use href="#g11" x="246" y="330"/><use href="#g57" x="258" y="330" fill="#0000f0"/><use href="#g22" x="270" y="330" fill="#009000"/><use href="#g45" x="276" y="330" fill="#0000f0"/><use href="#g11" x="48" y="340"/><use href="#g4" x="54" y="340"/><use href="#g10" x="60" y="340"/><use href="#g27" x="66" y="340"/><use href="#g27" x="72" y="340"/><use href="#g58" x="96" y="340" fill="#009000"/><use href="#g43" x="102" y="340" fill="#0000f0"/><use href="#g59" x="108" y="340" fill="#0000f0"/><use href="#g22" x="114" y="340" fill="#009000"/><use href="#g60" x="120" y="340" fill="#009000"/><use href="#g23" x="126" y="340" fill="#009000"/><use href="#g43" x="132" y="340" fill="#0000f0"/><use href="#g55" x="138" y="340" fill="#009000"/><use href="#g23" x="144" y="340" fill="#009000"/><use href="#g23" x="150" y="340" fill="#009000"/><use href="#g61" x="156" y="340" fill="#0000f0"/><use href="#g43" x="162" y="340" fill="#0000f0"/><use href="#g59" x="168" y="340" fill="#0000f0"/><use href="#g56" x="174" y="340" fill="#009000"/><use href="#g60" x="180" y="340" fill="#009000"/><use href="#g43" x="186" y="340" fill="#0000f0"/><use href="#g56" x="192" y="340" fill="#009000"/><use href="#g60" x="198" y="340" fill="#009000"/><use href="#g61" x="204" y="340" fill="#0000f0"/><use href="#g43" x="210" y="340" fill="#0000f0"/><use href="#g56" x="216" y="340" fill="#009000"/><use href="#g43" x="222" y="340" fill="#0000f0"/><use href="#g23" x="228" y="340" fill="#009000"/><use href="#g41" x="234" y="340" fill="#009000"/><use href="#g51" x="240" y="340" fill="#009000"/><use href="#g23" x="246" y="340" fill="#009000"/><use href="#g51" x="252" y="340" fill="#009000"/><use href="#g23" x="258" y="340" fill="#009000"/><use href="#g51" x="264" y="340" fill="#009000"/><use href="#g23" x="270" y="340" fill="#009000"/><use href="#g1" x="48" y="350"/><use href="#g31" x="54" y="350"/><use href="#g30" x="60" y="350"/><use href="#g7" x="96" y="350"/><use href="#g4" x="102" y="350"/><use href="#g41" x="108" y="350"/><use href="#g43" x="114" y="350" fill="#0000f0"/><use href="#g55" x="120" y="350" fill="#009000"/><use href="#g24" x="126" y="350" fill="#009000"/><use href="#g11" x="48" y="360"/><use href="#g35" x="54" y="360"/><use href="#g8" x="60" y="360"/><use href="#g48" x="96" y="360"/><use href="#g41" x="102" y="360"/><use href="#g43" x="108" y="360" fill="#0000f0"/><use href="#g4" x="114" y="360"/><use href="#g41" x="120" y="360"/><use href="#g10" x="48" y="370"/><use href="#g6" x="54" y="370"/><use href="#g6" x="60" y="370"/><use href="#g7" x="96" y="370"/><use href="#g48" x="102" y="370"/><use href="#g41" x="108" y="370"/><use href="#g43" x="114" y="370" fill="#0000f0"/><use href="#g55" x="120" y="370" fill="#009000"/><use href="#g62" x="126" y="370" fill="#009000"/><use href="#g1" x="138" y="370"/><use href="#g31" x="144" y="370"/><use href="#g27" x="150" y="370"/><use href="#g55" x="162" y="370" fill="#009000"/><use href="#g24" x="168" y="370" fill="#009000"/><use href="#g57" x="174" y="370" fill="#0000f0"/><use href="#g22" x="180" y="370" fill="#009000"/><use href="#g11" x="48" y="380"/><use href="#g4" x="54" y="380"/><use href="#g10" x="60" y="380"/><use href="#g27" x="66" y="380"/><use href="#g27" x="72" y="380"/><use href="#g22" x="96" y="380" fill="#009000"/><use href="#g43" x="102" y="380" fill="#0000f0"/><use href="#g43" x="108" y="380" fill="#0000f0"/><use href="#g23" x="114" y="380" fill="#009000"/><use href="#g41" x="120" y="380" fill="#009000"/><use href="#g58" x="126" y="380" fill="#009000"/><use href="#g23" x="132" y="380" fill="#009000"/><use href="#g23" x="138" y="380" fill="#009000"/><use href="#g23" x="144" y="380" fill="#009000"/><use href="#g23" x="150" y="380" fill="#009000"/><use href="#g23" x="156" y="380" fill="#009000"/><use href="#g23" x="162" y="380" fill="#009000"/><use href="#g23" x="168" y="380" fill="#009000"/><use href="#g43" x="174" y="380" fill="#0000f0"/><use href="#g29" x="180" y="380"/><use href="#g7" x="186" y="380"/><use href="#g41" x="192" y="380"/><use href="#g29" x="198" y="380"/><use href="#g40" x="204" y="380"/><use href="#g1" x="210" y="380"/><use href="#g10" x="216" y="380"/><use href="#g8" x="222" y="380"/><use href="#g7" x="228" y="380"/><use href="#g40" x="234" y="380"/><use href="#g48" x="240" y="380"/><use href="#g33" x="246" y="380"/><use href="#g29" x="252" y="380"/><use href="#g29" x="258" y="380"/><use href="#g35" x="264" y="380"/><use href="#g34" x="270" y="380"/><use href="#g10" x="48" y="390"/><use href="#g6" x="54" y="390"/><use href="#g6" x="60" y="390"/><use href="#g48" x="96" y="390"/><use href="#g41" x="102" y="390"/><use href="#g43" x="108" y="390" fill="#0000f0"/><use href="#g55" x="114" y="390" fill="#009000"/><use href="#g55" x="120" y="390" fill="#009000"/><use href="#g11" x="48" y="400"/><use href="#g4" x="54" y="400"/><use href="#g10" x="60" y="400"/><use href="#g27" x="66" y="400"/><use href="#g27" x="72" y="400"/><use href="#g43" x="96" y="400" fill="#0000f0"/><use href="#g43" x="102" y="400" fill="#0000f0"/><use href="#g43" x="108" y="400" fill="#0000f0"/><use href="#g29" x="114" y="400"/><use href="#g7" x="120" y="400"/><use href="#g41" x="126" y="400"/><use href="#g29" x="132" y="400"/><use href="#g40" x="138" y="400"/><use href="#g1" x="144" y="400"/><use href="#g10" x="150" y="400"/><use href="#g8" x="156" y="400"/><use href="#g7" x="162" y="400"/><use href="#g40" x="168" y="400"/><use href="#g48" x="174" y="400"/><use href="#g33" x="180" y="400"/><use href="#g29" x="186" y="400"/><use href="#g29" x="192" y="400"/><use href="#g35" x="198" y="400"/><use href="#g34" x="204" y="400"/><use href="#g9" x="210" y="400"/><use href="#g55" x="216" y="400"/><use href="#g39" x="48" y="410" fill="#747474"/><use href="#g14" x="60" y="410" fill="#747474"/><use href="#g34" x="66" y="410" fill="#747474"/><use href="#g1" x="72" y="410" fill="#747474"/><use href="#g7" x="78" y="410" fill="#747474"/><use href="#g30" x="84" y="410" fill="#747474"/><use href="#g29" x="90" y="410" fill="#747474"/><use href="#g31" x="102" y="410" fill="#747474"/><use href="#g35" x="108" y="410" fill="#747474"/><use href="#g30" x="114" y="410" fill="#747474"/><use href="#g5" x="120" y="410" fill="#747474"/><use href="#g63" x="126" y="410" fill="#747474"/><use href="#g35" x="132" y="410" fill="#747474"/><use href="#g34" x="138" y="410" fill="#747474"/><use href="#g29" x="144" y="410" fill="#747474"/><use href="#g10" x="150" y="410" fill="#747474"/><use href="#g27" x="156" y="410" fill="#747474"/><use href="#g48" x="168" y="410" fill="#747474"/><use href="#g10" x="174" y="410" fill="#747474"/><use href="#g30" x="180" y="410" fill="#747474"/><use href="#g1" x="186" y="410" fill="#747474"/><use href="#g5" x="204" y="410" fill="#747474"/><use href="#g34" x="210" y="410" fill="#747474"/><use href="#g27" x="222" y="410" fill="#747474"/><use href="#g5" x="228" y="410" fill="#747474"/><use href="#g1" x="234" y="410" fill="#747474"/><use href="#g29" x="240" y="410" fill="#747474"/><use href="#g10" x="252" y="410" fill="#747474"/><use href="#g30" x="258" y="410" fill="#747474"/><use href="#g7" x="264" y="410" fill="#747474"/><use href="#g10" x="270" y="410" fill="#747474"/><use href="#g11" x="48" y="420"/><use href="#g35" x="54" y="420"/><use href="#g8" x="60" y="420"/><use href="#g7" x="96" y="420"/><use href="#g10" x="102" y="420"/><use href="#g41" x="108" y="420"/><use href="#g43" x="114" y="420" fill="#0000f0"/><use href="#g55" x="126" y="420" fill="#009000"/><use href="#g62" x="132" y="420" fill="#009000"/><use href="#g39" x="240" y="420" fill="#747474"/><use href="#g6" x="252" y="420" fill="#747474"/><use href="#g30" x="258" y="420" fill="#747474"/><use href="#g10" x="264" y="420" fill="#747474"/><use href="#g47" x="270" y="420" fill="#747474"/><use href="#g48" x="282" y="420" fill="#747474"/><use href="#g11" x="48" y="430"/><use href="#g35" x="54" y="430"/><use href="#g8" x="60" y="430"/><use href="#g7" x="96" y="430"/><use href="#g48" x="102" y="430"/><use href="#g41" x="108" y="430"/><use href="#g43" x="114" y="430" fill="#0000f0"/><use href="#g55" x="126" y="430" fill="#009000"/><use href="#g58" x="132" y="430" fill="#009000"/><use href="#g39" x="240" y="430" fill="#747474"/><use href="#g1" x="252" y="430" fill="#747474"/><use href="#g7" x="258" y="430" fill="#747474"/><use href="#g29" x="264" y="430" fill="#747474"/><use href="#g64" x="276" y="430" fill="#747474"/><use href="#g1" x="282" y="430" fill="#747474"/><use href="#g1" x="48" y="440"/><use href="#g31" x="54" y="440"/><use href="#g27" x="60" y="440"/><use href="#g7" x="96" y="440"/><use href="#g48" x="102" y="440"/><use href="#g41" x="108" y="440"/><use href="#g43" x="114" y="440" fill="#0000f0"/><use href="#g55" x="126" y="440" fill="#009000"/><use href="#g24" x="132" y="440" fill="#009000"/><use href="#g39" x="240" y="440" fill="#747474"/><use href="#g11" x="48" y="450"/><use href="#g35" x="54" y="450"/><use href="#g8" x="60" y="450"/><use href="#g48" x="96" y="450"/><use href="#g41" x="102" y="450"/><use href="#g43" x="108" y="450" fill="#0000f0"/><use href="#g47" x="120" y="450"/><use href="#g35" x="126" y="450"/><use href="#g30" x="132" y="450"/><use href="#g6" x="138" y="450"/><use href="#g44" x="150" y="450" fill="#0000f0"/><use href="#g26" x="156" y="450"/><use href="#g35" x="162" y="450"/><use href="#g30" x="168" y="450"/><use href="#g11" x="174" y="450"/><use href="#g45" x="180" y="450" fill="#0000f0"/><use href="#g39" x="192" y="450" fill="#747474"/><use href="#g36" x="204" y="450" fill="#747474"/><use href="#g7" x="210" y="450" fill="#747474"/><use href="#g29" x="216" y="450" fill="#747474"/><use href="#g47" x="228" y="450" fill="#747474"/><use href="#g5" x="234" y="450" fill="#747474"/><use href="#g6" x="240" y="450" fill="#747474"/><use href="#g29" x="246" y="450" fill="#747474"/><use href="#g31" x="252" y="450" fill="#747474"/><use href="#g35" x="264" y="450" fill="#747474"/><use href="#g49" x="270" y="450" fill="#747474"/><use href="#g47" x="282" y="450" fill="#747474"/><use href="#g1" x="48" y="460"/><use href="#g33" x="54" y="460"/><use href="#g48" x="60" y="460"/><use href="#g48" x="96" y="460"/><use href="#g41" x="102" y="460"/><use href="#g43" x="108" y="460" fill="#0000f0"/><use href="#g62" x="120" y="460" fill="#009000"/><use href="#g56" x="126" y="460" fill="#009000"/><use href="#g39" x="240" y="460" fill="#747474"/><use href="#g48" x="252" y="460" fill="#747474"/><use href="#g10" x="258" y="460" fill="#747474"/><use href="#g30" x="264" y="460" fill="#747474"/><use href="#g5" x="276" y="460" fill="#747474"/><use href="#g1" x="282" y="460" fill="#747474"/></g><g fill="#000" transform="translate(13 548)"><use href="#g3" x="0"/><use href="#g4" x="6"/><use href="#g5" x="12"/><use href="#g6" x="18"/><use href="#g7" x="24"/><use href="#g8" x="30"/><use href="#g9" x="36"/><use href="#g10" x="42"/><use href="#g1" x="48"/><use href="#g11" x="54"/></g><g fill="#000" transform="translate(29 566)"><use href="#g55" x="0"/><use href="#g24" x="6"/><use href="#g65" x="12"/><use href="#g43" x="18"/><use href="#g46" x="24"/><use href="#g22" x="30"/></g></svg>
<div class="a" style="left:297px;top:114px;width:505px;height:438px;background:#000"></div><div class="a" style="left:298px;top:115px;width:503px;height:436px;background:#888888"></div><div class="a" style="left:298px;top:116px;width:454px;height:19px;background:linear-gradient(#ececec,#868686)"></div><div class="a" style="left:298px;top:115px;width:454px;height:1px;background:#ffffff"></div><div class="a" style="left:298px;top:115px;width:1px;height:20px;background:#f4f4f4"></div><div class="a" style="left:752px;top:115px;width:1px;height:20px;background:#000"></div><div class="a" style="left:753px;top:115px;width:48px;height:6px;background:linear-gradient(#ffffff,#dcc0c0)"></div><div class="a" style="left:753px;top:121px;width:48px;height:14px;background:linear-gradient(#840000,#c80000)"></div><div class="a" style="left:301px;top:135px;width:497px;height:413px;background:#000"></div><div class="a" style="left:302px;top:136px;width:495px;height:411px;background:#ffffff"></div><div class="a" style="left:307px;top:151px;width:16px;height:1px;background:#000"></div><div class="a" style="left:367px;top:151px;width:372px;height:1px;background:#000"></div><div class="a" style="left:783px;top:151px;width:9px;height:1px;background:#000"></div><div class="a" style="left:307px;top:151px;width:1px;height:371px;background:#000"></div><div class="a" style="left:791px;top:151px;width:1px;height:371px;background:#000"></div><div class="a" style="left:307px;top:188px;width:485px;height:1px;background:#000"></div><div class="a" style="left:307px;top:231px;width:485px;height:1px;background:#000"></div><div class="a" style="left:307px;top:397px;width:485px;height:1px;background:#000"></div><div class="a" style="left:307px;top:521px;width:485px;height:1px;background:#000"></div><div class="a" style="left:309px;top:234px;width:480px;height:10px;background:#0000f0"></div><div class="a" style="left:307px;top:527px;width:485px;height:1px;background:#000"></div><div class="a" style="left:307px;top:541px;width:485px;height:1px;background:#000"></div><div class="a" style="left:307px;top:527px;width:1px;height:15px;background:#000"></div><div class="a" style="left:791px;top:527px;width:1px;height:15px;background:#000"></div><div class="a" style="left:309px;top:529px;width:1px;height:10px;background:#000"></div><svg class="a" style="left:0;top:0" width="804" height="581" shape-rendering="crispEdges"><path fill="#000" d="M781 121h4v1h-4zM786 121h4v1h-4zM781 122h1v1h-1zM784 122h1v1h-1zM786 122h1v1h-1zM789 122h1v1h-1zM781 123h1v1h-1zM785 123h1v1h-1zM789 123h1v1h-1zM781 124h2v1h-2zM788 124h2v1h-2zM782 125h2v1h-2zM787 125h2v1h-2zM781 126h2v1h-2zM788 126h2v1h-2zM781 127h1v1h-1zM785 127h1v1h-1zM789 127h1v1h-1zM781 128h1v1h-1zM784 128h1v1h-1zM786 128h1v1h-1zM789 128h1v1h-1zM781 129h4v1h-4zM786 129h4v1h-4z"/><path fill="#ffffff" d="M782 122h2v1h-2zM787 122h2v1h-2zM782 123h3v1h-3zM786 123h3v1h-3zM783 124h5v1h-5zM784 125h3v1h-3zM783 126h5v1h-5zM782 127h3v1h-3zM786 127h3v1h-3zM782 128h2v1h-2zM787 128h2v1h-2z"/><path fill="#000" d="M760 126h7v1h-7zM760 127h1v1h-1zM766 127h1v1h-1zM760 128h1v1h-1zM766 128h1v1h-1zM760 129h7v1h-7z"/><path fill="#ffffff" d="M761 127h5v1h-5zM761 128h5v1h-5z"/></svg>
<div class="tx" style="left:302px;top:121px">Kolibri Debugger</div><div class="tx" style="left:327px;top:145px">pcidev</div><div class="tx" style="left:743px;top:145px">Paused</div><div class="tx" style="left:309px;top:155px">EAX=20202020          EBX=0000000C          ECX=00000C00          EDX=100282D0
ESI=00002E1A          EDI=0000F000          EBP=00002D58          ESP=00008F71
EIP=00000465          EFLAGS=00001246: c P a Z s d o</div><div class="tx" style="left:309px;top:190px">00000000:   4D 45 4E 55 45 54 30 31 - 01 00 00 00 23 02 00 00   MENUET01····#···
00000010:   35 2E 00 00 7D 93 00 00 - 7D 8F 00 00 00 00 00 00   5.··}У··}П······
00000020:   7D 3E 00 00 FF 35 90 01 - 00 00 58 85 C0 75 27 6A   }&gt;·· 5Р···XЕ└u'j
00000030:   44 58 6A 0B 5B CD 40 6A - 44 58 6A 0C 5B B9 00 10   DXj·[═@jDXj·[╣··</div><div class="tx" style="left:309px;top:234px">00000465: F3 AB                         rep stosd
00000467: 5F                            pop     edi
00000468: BE BA 2A 00 00                mov     esi, 2ABAh
0000046D: 31 C9                         xor     ecx, ecx
0000046F: 8A 0E                         mov     cl, [esi]
00000471: 46                            inc     esi
00000472: F3 A4                         rep movsb
00000474: B0 0A                         mov     al, 0Ah
00000476: AA                            stosb
00000477: 80 3E FF                      cmp     byte [esi], 0FFh
0000047A: 75 F3                         jnz     46Fh
0000047C: 89 3D 74 2E 00 00             mov     [2E74h], edi
00000482: 31 FF                         xor     edi, edi
00000484: C3                            ret
00000485: E8 C9 FF FF FF                call    453h
0000048A: C6 05 35 2E 00 00 00          mov     byte [2E35h], 0</div><div class="tx" style="left:309px;top:398px">&gt; g
Debugged program caused an exception 0E. Suspended
&gt; reload
Program terminated.
Program loaded successfully! PID=00B2. Use "g" to run.
&gt; g
Debugged program caused an exception 0E. Suspended
Program terminated.
&gt; reload
Program loaded successfully! PID=00B7. Use "g" to run.
&gt; g
Debugged program caused an exception 0E. Suspended</div><svg class="a" style="left:0;top:0" width="804" height="581" shape-rendering="crispEdges"><g fill="#000" transform="translate(302 122)"><use href="#g66" x="0"/><use href="#g35" x="6"/><use href="#g27" x="12"/><use href="#g5" x="18"/><use href="#g48" x="24"/><use href="#g30" x="30"/><use href="#g5" x="36"/><use href="#g18" x="48"/><use href="#g7" x="54"/><use href="#g48" x="60"/><use href="#g33" x="66"/><use href="#g36" x="72"/><use href="#g36" x="78"/><use href="#g7" x="84"/><use href="#g30" x="90"/></g><g fill="#000" transform="translate(327 146)"><use href="#g38" x="0"/><use href="#g4" x="6"/><use href="#g5" x="12"/><use href="#g6" x="18"/><use href="#g7" x="24"/><use href="#g8" x="30"/></g><g fill="#000" transform="translate(743 146)"><use href="#g3" x="0"/><use href="#g10" x="6"/><use href="#g33" x="12"/><use href="#g1" x="18"/><use href="#g7" x="24"/><use href="#g6" x="30"/></g><g fill="#000" transform="translate(309 156)"><use href="#g28" x="0" fill="#00a800"/><use href="#g17" x="6" fill="#00a800"/><use href="#g64" x="12" fill="#00a800"/><use href="#g67" x="18" fill="#00a800"/><use href="#g56" x="24" fill="#00a800"/><use href="#g23" x="30" fill="#00a800"/><use href="#g56" x="36" fill="#00a800"/><use href="#g23" x="42" fill="#00a800"/><use href="#g56" x="48" fill="#00a800"/><use href="#g23" x="54" fill="#00a800"/><use href="#g56" x="60" fill="#00a800"/><use href="#g23" x="66" fill="#00a800"/><use href="#g28" x="132" fill="#00a800"/><use href="#g68" x="138" fill="#00a800"/><use href="#g64" x="144" fill="#00a800"/><use href="#g67" x="150" fill="#00a800"/><use href="#g23" x="156" fill="#00a800"/><use href="#g23" x="162" fill="#00a800"/><use href="#g23" x="168" fill="#00a800"/><use href="#g23" x="174" fill="#00a800"/><use href="#g23" x="180" fill="#00a800"/><use href="#g23" x="186" fill="#00a800"/><use href="#g23" x="192" fill="#00a800"/><use href="#g51" x="198" fill="#00a800"/><use href="#g28" x="264" fill="#00a800"/><use href="#g51" x="270" fill="#00a800"/><use href="#g64" x="276" fill="#00a800"/><use href="#g67" x="282" fill="#00a800"/><use href="#g23" x="288" fill="#00a800"/><use href="#g23" x="294" fill="#00a800"/><use href="#g23" x="300" fill="#00a800"/><use href="#g23" x="306" fill="#00a800"/><use href="#g23" x="312" fill="#00a800"/><use href="#g51" x="318" fill="#00a800"/><use href="#g23" x="324" fill="#00a800"/><use href="#g23" x="330" fill="#00a800"/><use href="#g28" x="396" fill="#00a800"/><use href="#g18" x="402" fill="#00a800"/><use href="#g64" x="408" fill="#00a800"/><use href="#g67" x="414" fill="#00a800"/><use href="#g55" x="420" fill="#00a800"/><use href="#g23" x="426" fill="#00a800"/><use href="#g23" x="432" fill="#00a800"/><use href="#g56" x="438" fill="#00a800"/><use href="#g58" x="444" fill="#00a800"/><use href="#g56" x="450" fill="#00a800"/><use href="#g18" x="456" fill="#00a800"/><use href="#g23" x="462" fill="#00a800"/><use href="#g28" x="0" y="10" fill="#00a800"/><use href="#g19" x="6" y="10" fill="#00a800"/><use href="#g14" x="12" y="10" fill="#00a800"/><use href="#g67" x="18" y="10" fill="#00a800"/><use href="#g23" x="24" y="10" fill="#00a800"/><use href="#g23" x="30" y="10" fill="#00a800"/><use href="#g23" x="36" y="10" fill="#00a800"/><use href="#g23" x="42" y="10" fill="#00a800"/><use href="#g56" x="48" y="10" fill="#00a800"/><use href="#g28" x="54" y="10" fill="#00a800"/><use href="#g55" x="60" y="10" fill="#00a800"/><use href="#g17" x="66" y="10" fill="#00a800"/><use href="#g28" x="132" y="10" fill="#00a800"/><use href="#g18" x="138" y="10" fill="#00a800"/><use href="#g14" x="144" y="10" fill="#00a800"/><use href="#g67" x="150" y="10" fill="#00a800"/><use href="#g23" x="156" y="10" fill="#00a800"/><use href="#g23" x="162" y="10" fill="#00a800"/><use href="#g23" x="168" y="10" fill="#00a800"/><use href="#g23" x="174" y="10" fill="#00a800"/><use href="#g26" x="180" y="10" fill="#00a800"/><use href="#g23" x="186" y="10" fill="#00a800"/><use href="#g23" x="192" y="10" fill="#00a800"/><use href="#g23" x="198" y="10" fill="#00a800"/><use href="#g28" x="264" y="10" fill="#00a800"/><use href="#g68" x="270" y="10" fill="#00a800"/><use href="#g3" x="276" y="10" fill="#00a800"/><use href="#g67" x="282" y="10" fill="#00a800"/><use href="#g23" x="288" y="10" fill="#00a800"/><use href="#g23" x="294" y="10" fill="#00a800"/><use href="#g23" x="300" y="10" fill="#00a800"/><use href="#g23" x="306" y="10" fill="#00a800"/><use href="#g56" x="312" y="10" fill="#00a800"/><use href="#g18" x="318" y="10" fill="#00a800"/><use href="#g60" x="324" y="10" fill="#00a800"/><use href="#g58" x="330" y="10" fill="#00a800"/><use href="#g28" x="396" y="10" fill="#00a800"/><use href="#g19" x="402" y="10" fill="#00a800"/><use href="#g3" x="408" y="10" fill="#00a800"/><use href="#g67" x="414" y="10" fill="#00a800"/><use href="#g23" x="420" y="10" fill="#00a800"/><use href="#g23" x="426" y="10" fill="#00a800"/><use href="#g23" x="432" y="10" fill="#00a800"/><use href="#g23" x="438" y="10" fill="#00a800"/><use href="#g58" x="444" y="10" fill="#00a800"/><use href="#g26" x="450" y="10" fill="#00a800"/><use href="#g65" x="456" y="10" fill="#00a800"/><use href="#g55" x="462" y="10" fill="#00a800"/><use href="#g28" x="0" y="20" fill="#00a800"/><use href="#g14" x="6" y="20" fill="#00a800"/><use href="#g3" x="12" y="20" fill="#00a800"/><use href="#g67" x="18" y="20" fill="#00a800"/><use href="#g23" x="24" y="20" fill="#00a800"/><use href="#g23" x="30" y="20" fill="#00a800"/><use href="#g23" x="36" y="20" fill="#00a800"/><use href="#g23" x="42" y="20" fill="#00a800"/><use href="#g23" x="48" y="20" fill="#00a800"/><use href="#g22" x="54" y="20" fill="#00a800"/><use href="#g24" x="60" y="20" fill="#00a800"/><use href="#g60" x="66" y="20" fill="#00a800"/><use href="#g28" x="132" y="20" fill="#00a800"/><use href="#g26" x="138" y="20" fill="#00a800"/><use href="#g69" x="144" y="20" fill="#00a800"/><use href="#g17" x="150" y="20" fill="#00a800"/><use href="#g70" x="156" y="20" fill="#00a800"/><use href="#g19" x="162" y="20" fill="#00a800"/><use href="#g67" x="168" y="20" fill="#00a800"/><use href="#g23" x="174" y="20" fill="#00a800"/><use href="#g23" x="180" y="20" fill="#00a800"/><use href="#g23" x="186" y="20" fill="#00a800"/><use href="#g23" x="192" y="20" fill="#00a800"/><use href="#g55" x="198" y="20" fill="#00a800"/><use href="#g56" x="204" y="20" fill="#00a800"/><use href="#g22" x="210" y="20" fill="#00a800"/><use href="#g24" x="216" y="20" fill="#00a800"/><use href="#g42" x="222" y="20"/><use href="#g4" x="234" y="20"/><use href="#g3" x="246" y="20" fill="#00a800"/><use href="#g10" x="258" y="20"/><use href="#g71" x="270" y="20" fill="#00a800"/><use href="#g1" x="282" y="20"/><use href="#g6" x="294" y="20"/><use href="#g35" x="306" y="20"/></g><g fill="#000" transform="translate(309 191)"><use href="#g23" x="0"/><use href="#g23" x="6"/><use href="#g23" x="12"/><use href="#g23" x="18"/><use href="#g23" x="24"/><use href="#g23" x="30"/><use href="#g23" x="36"/><use href="#g23" x="42"/><use href="#g42" x="48"/><use href="#g22" x="72"/><use href="#g18" x="78"/><use href="#g22" x="90"/><use href="#g60" x="96"/><use href="#g22" x="108"/><use href="#g28" x="114"/><use href="#g60" x="126"/><use href="#g60" x="132"/><use href="#g22" x="144"/><use href="#g60" x="150"/><use href="#g60" x="162"/><use href="#g22" x="168"/><use href="#g62" x="180"/><use href="#g23" x="186"/><use href="#g62" x="198"/><use href="#g55" x="204"/><use href="#g12" x="216"/><use href="#g23" x="228"/><use href="#g55" x="234"/><use href="#g23" x="246"/><use href="#g23" x="252"/><use href="#g23" x="264"/><use href="#g23" x="270"/><use href="#g23" x="282"/><use href="#g23" x="288"/><use href="#g56" x="300"/><use href="#g62" x="306"/><use href="#g23" x="318"/><use href="#g56" x="324"/><use href="#g23" x="336"/><use href="#g23" x="342"/><use href="#g23" x="354"/><use href="#g23" x="360"/><use href="#g72" x="384"/><use href="#g28" x="390"/><use href="#g15" x="396"/><use href="#g73" x="402"/><use href="#g28" x="408"/><use href="#g13" x="414"/><use href="#g23" x="420"/><use href="#g55" x="426"/><use href="#g74" x="432"/><use href="#g74" x="438"/><use href="#g74" x="444"/><use href="#g74" x="450"/><use href="#g75" x="456"/><use href="#g74" x="462"/><use href="#g74" x="468"/><use href="#g74" x="474"/><use href="#g23" x="0" y="10"/><use href="#g23" x="6" y="10"/><use href="#g23" x="12" y="10"/><use href="#g23" x="18" y="10"/><use href="#g23" x="24" y="10"/><use href="#g23" x="30" y="10"/><use href="#g55" x="36" y="10"/><use href="#g23" x="42" y="10"/><use href="#g42" x="48" y="10"/><use href="#g62" x="72" y="10"/><use href="#g60" x="78" y="10"/><use href="#g56" x="90" y="10"/><use href="#g28" x="96" y="10"/><use href="#g23" x="108" y="10"/><use href="#g23" x="114" y="10"/><use href="#g23" x="126" y="10"/><use href="#g23" x="132" y="10"/><use href="#g65" x="144" y="10"/><use href="#g18" x="150" y="10"/><use href="#g46" x="162" y="10"/><use href="#g62" x="168" y="10"/><use href="#g23" x="180" y="10"/><use href="#g23" x="186" y="10"/><use href="#g23" x="198" y="10"/><use href="#g23" x="204" y="10"/><use href="#g12" x="216" y="10"/><use href="#g65" x="228" y="10"/><use href="#g18" x="234" y="10"/><use href="#g58" x="246" y="10"/><use href="#g26" x="252" y="10"/><use href="#g23" x="264" y="10"/><use href="#g23" x="270" y="10"/><use href="#g23" x="282" y="10"/><use href="#g23" x="288" y="10"/><use href="#g23" x="300" y="10"/><use href="#g23" x="306" y="10"/><use href="#g23" x="318" y="10"/><use href="#g23" x="324" y="10"/><use href="#g23" x="336" y="10"/><use href="#g23" x="342" y="10"/><use href="#g23" x="354" y="10"/><use href="#g23" x="360" y="10"/><use href="#g60" x="384" y="10"/><use href="#g9" x="390" y="10"/><use href="#g74" x="396" y="10"/><use href="#g74" x="402" y="10"/><use href="#g76" x="408" y="10"/><use href="#g77" x="414" y="10"/><use href="#g74" x="420" y="10"/><use href="#g74" x="426" y="10"/><use href="#g76" x="432" y="10"/><use href="#g78" x="438" y="10"/><use href="#g74" x="444" y="10"/><use href="#g74" x="450" y="10"/><use href="#g74" x="456" y="10"/><use href="#g74" x="462" y="10"/><use href="#g74" x="468" y="10"/><use href="#g74" x="474" y="10"/><use href="#g23" x="0" y="20"/><use href="#g23" x="6" y="20"/><use href="#g23" x="12" y="20"/><use href="#g23" x="18" y="20"/><use href="#g23" x="24" y="20"/><use href="#g23" x="30" y="20"/><use href="#g56" x="36" y="20"/><use href="#g23" x="42" y="20"/><use href="#g42" x="48" y="20"/><use href="#g65" x="72" y="20"/><use href="#g18" x="78" y="20"/><use href="#g62" x="90" y="20"/><use href="#g28" x="96" y="20"/><use href="#g23" x="108" y="20"/><use href="#g23" x="114" y="20"/><use href="#g23" x="126" y="20"/><use href="#g23" x="132" y="20"/><use href="#g26" x="144" y="20"/><use href="#g26" x="150" y="20"/><use href="#g62" x="162" y="20"/><use href="#g60" x="168" y="20"/><use href="#g46" x="180" y="20"/><use href="#g23" x="186" y="20"/><use href="#g23" x="198" y="20"/><use href="#g55" x="204" y="20"/><use href="#g12" x="216" y="20"/><use href="#g23" x="228" y="20"/><use href="#g23" x="234" y="20"/><use href="#g23" x="246" y="20"/><use href="#g23" x="252" y="20"/><use href="#g60" x="264" y="20"/><use href="#g58" x="270" y="20"/><use href="#g58" x="282" y="20"/><use href="#g60" x="288" y="20"/><use href="#g51" x="300" y="20"/><use href="#g23" x="306" y="20"/><use href="#g65" x="318" y="20"/><use href="#g60" x="324" y="20"/><use href="#g56" x="336" y="20"/><use href="#g65" x="342" y="20"/><use href="#g24" x="354" y="20"/><use href="#g17" x="360" y="20"/><use href="#g76" x="384" y="20"/><use href="#g61" x="390" y="20"/><use href="#g74" x="396" y="20"/><use href="#g74" x="402" y="20"/><use href="#g60" x="414" y="20"/><use href="#g79" x="420" y="20"/><use href="#g74" x="426" y="20"/><use href="#g74" x="432" y="20"/><use href="#g74" x="438" y="20"/><use href="#g64" x="444" y="20"/><use href="#g80" x="450" y="20"/><use href="#g81" x="456" y="20"/><use href="#g33" x="462" y="20"/><use href="#g50" x="468" y="20"/><use href="#g54" x="474" y="20"/><use href="#g23" x="0" y="30"/><use href="#g23" x="6" y="30"/><use href="#g23" x="12" y="30"/><use href="#g23" x="18" y="30"/><use href="#g23" x="24" y="30"/><use href="#g23" x="30" y="30"/><use href="#g62" x="36" y="30"/><use href="#g23" x="42" y="30"/><use href="#g42" x="48" y="30"/><use href="#g22" x="72" y="30"/><use href="#g22" x="78" y="30"/><use href="#g60" x="90" y="30"/><use href="#g58" x="96" y="30"/><use href="#g24" x="108" y="30"/><use href="#g17" x="114" y="30"/><use href="#g23" x="126" y="30"/><use href="#g68" x="132" y="30"/><use href="#g60" x="144" y="30"/><use href="#g68" x="150" y="30"/><use href="#g51" x="162" y="30"/><use href="#g18" x="168" y="30"/><use href="#g22" x="180" y="30"/><use href="#g23" x="186" y="30"/><use href="#g24" x="198" y="30"/><use href="#g17" x="204" y="30"/><use href="#g12" x="216" y="30"/><use href="#g22" x="228" y="30"/><use href="#g22" x="234" y="30"/><use href="#g60" x="246" y="30"/><use href="#g58" x="252" y="30"/><use href="#g24" x="264" y="30"/><use href="#g17" x="270" y="30"/><use href="#g23" x="282" y="30"/><use href="#g51" x="288" y="30"/><use href="#g60" x="300" y="30"/><use href="#g68" x="306" y="30"/><use href="#g68" x="318" y="30"/><use href="#g46" x="324" y="30"/><use href="#g23" x="336" y="30"/><use href="#g23" x="342" y="30"/><use href="#g55" x="354" y="30"/><use href="#g23" x="360" y="30"/><use href="#g18" x="384" y="30"/><use href="#g64" x="390" y="30"/><use href="#g54" x="396" y="30"/><use href="#g74" x="402" y="30"/><use href="#g44" x="408" y="30"/><use href="#g82" x="414" y="30"/><use href="#g53" x="420" y="30"/><use href="#g54" x="426" y="30"/><use href="#g18" x="432" y="30"/><use href="#g64" x="438" y="30"/><use href="#g54" x="444" y="30"/><use href="#g74" x="450" y="30"/><use href="#g44" x="456" y="30"/><use href="#g83" x="462" y="30"/><use href="#g74" x="468" y="30"/><use href="#g74" x="474" y="30"/></g><g fill="#000" transform="translate(309 235)"><use href="#g23" x="0" fill="#fff"/><use href="#g23" x="6" fill="#fff"/><use href="#g23" x="12" fill="#fff"/><use href="#g23" x="18" fill="#fff"/><use href="#g23" x="24" fill="#fff"/><use href="#g22" x="30" fill="#fff"/><use href="#g24" x="36" fill="#fff"/><use href="#g60" x="42" fill="#fff"/><use href="#g42" x="48" fill="#fff"/><use href="#g26" x="60" fill="#fff"/><use href="#g62" x="66" fill="#fff"/><use href="#g17" x="78" fill="#fff"/><use href="#g68" x="84" fill="#fff"/><use href="#g30" x="240" fill="#fff"/><use href="#g7" x="246" fill="#fff"/><use href="#g38" x="252" fill="#fff"/><use href="#g1" x="264" fill="#fff"/><use href="#g29" x="270" fill="#fff"/><use href="#g35" x="276" fill="#fff"/><use href="#g1" x="282" fill="#fff"/><use href="#g6" x="288" fill="#fff"/><use href="#g23" x="0" y="10"/><use href="#g23" x="6" y="10"/><use href="#g23" x="12" y="10"/><use href="#g23" x="18" y="10"/><use href="#g23" x="24" y="10"/><use href="#g22" x="30" y="10"/><use href="#g24" x="36" y="10"/><use href="#g65" x="42" y="10"/><use href="#g42" x="48" y="10"/><use href="#g60" x="60" y="10"/><use href="#g26" x="66" y="10"/><use href="#g38" x="240" y="10"/><use href="#g35" x="246" y="10"/><use href="#g38" x="252" y="10"/><use href="#g7" x="288" y="10"/><use href="#g6" x="294" y="10"/><use href="#g5" x="300" y="10"/><use href="#g23" x="0" y="20"/><use href="#g23" x="6" y="20"/><use href="#g23" x="12" y="20"/><use href="#g23" x="18" y="20"/><use href="#g23" x="24" y="20"/><use href="#g22" x="30" y="20"/><use href="#g24" x="36" y="20"/><use href="#g58" x="42" y="20"/><use href="#g42" x="48" y="20"/><use href="#g68" x="60" y="20"/><use href="#g28" x="66" y="20"/><use href="#g68" x="78" y="20"/><use href="#g17" x="84" y="20"/><use href="#g56" x="96" y="20"/><use href="#g17" x="102" y="20"/><use href="#g23" x="114" y="20"/><use href="#g23" x="120" y="20"/><use href="#g23" x="132" y="20"/><use href="#g23" x="138" y="20"/><use href="#g11" x="240" y="20"/><use href="#g35" x="246" y="20"/><use href="#g8" x="252" y="20"/><use href="#g7" x="288" y="20"/><use href="#g1" x="294" y="20"/><use href="#g5" x="300" y="20"/><use href="#g43" x="306" y="20"/><use href="#g56" x="318" y="20"/><use href="#g17" x="324" y="20"/><use href="#g68" x="330" y="20"/><use href="#g17" x="336" y="20"/><use href="#g31" x="342" y="20"/><use href="#g23" x="0" y="30"/><use href="#g23" x="6" y="30"/><use href="#g23" x="12" y="30"/><use href="#g23" x="18" y="30"/><use href="#g23" x="24" y="30"/><use href="#g22" x="30" y="30"/><use href="#g24" x="36" y="30"/><use href="#g18" x="42" y="30"/><use href="#g42" x="48" y="30"/><use href="#g62" x="60" y="30"/><use href="#g55" x="66" y="30"/><use href="#g51" x="78" y="30"/><use href="#g46" x="84" y="30"/><use href="#g41" x="240" y="30"/><use href="#g35" x="246" y="30"/><use href="#g30" x="252" y="30"/><use href="#g7" x="288" y="30"/><use href="#g4" x="294" y="30"/><use href="#g41" x="300" y="30"/><use href="#g43" x="306" y="30"/><use href="#g7" x="318" y="30"/><use href="#g4" x="324" y="30"/><use href="#g41" x="330" y="30"/><use href="#g23" x="0" y="40"/><use href="#g23" x="6" y="40"/><use href="#g23" x="12" y="40"/><use href="#g23" x="18" y="40"/><use href="#g23" x="24" y="40"/><use href="#g22" x="30" y="40"/><use href="#g24" x="36" y="40"/><use href="#g26" x="42" y="40"/><use href="#g42" x="48" y="40"/><use href="#g58" x="60" y="40"/><use href="#g17" x="66" y="40"/><use href="#g23" x="78" y="40"/><use href="#g28" x="84" y="40"/><use href="#g11" x="240" y="40"/><use href="#g35" x="246" y="40"/><use href="#g8" x="252" y="40"/><use href="#g4" x="288" y="40"/><use href="#g27" x="294" y="40"/><use href="#g43" x="300" y="40"/><use href="#g44" x="312" y="40"/><use href="#g7" x="318" y="40"/><use href="#g1" x="324" y="40"/><use href="#g5" x="330" y="40"/><use href="#g45" x="336" y="40"/><use href="#g23" x="0" y="50"/><use href="#g23" x="6" y="50"/><use href="#g23" x="12" y="50"/><use href="#g23" x="18" y="50"/><use href="#g23" x="24" y="50"/><use href="#g22" x="30" y="50"/><use href="#g65" x="36" y="50"/><use href="#g55" x="42" y="50"/><use href="#g42" x="48" y="50"/><use href="#g22" x="60" y="50"/><use href="#g24" x="66" y="50"/><use href="#g5" x="240" y="50"/><use href="#g34" x="246" y="50"/><use href="#g4" x="252" y="50"/><use href="#g7" x="288" y="50"/><use href="#g1" x="294" y="50"/><use href="#g5" x="300" y="50"/><use href="#g23" x="0" y="60"/><use href="#g23" x="6" y="60"/><use href="#g23" x="12" y="60"/><use href="#g23" x="18" y="60"/><use href="#g23" x="24" y="60"/><use href="#g22" x="30" y="60"/><use href="#g65" x="36" y="60"/><use href="#g56" x="42" y="60"/><use href="#g42" x="48" y="60"/><use href="#g26" x="60" y="60"/><use href="#g62" x="66" y="60"/><use href="#g17" x="78" y="60"/><use href="#g22" x="84" y="60"/><use href="#g30" x="240" y="60"/><use href="#g7" x="246" y="60"/><use href="#g38" x="252" y="60"/><use href="#g11" x="264" y="60"/><use href="#g35" x="270" y="60"/><use href="#g8" x="276" y="60"/><use href="#g1" x="282" y="60"/><use href="#g48" x="288" y="60"/><use href="#g23" x="0" y="70"/><use href="#g23" x="6" y="70"/><use href="#g23" x="12" y="70"/><use href="#g23" x="18" y="70"/><use href="#g23" x="24" y="70"/><use href="#g22" x="30" y="70"/><use href="#g65" x="36" y="70"/><use href="#g22" x="42" y="70"/><use href="#g42" x="48" y="70"/><use href="#g68" x="60" y="70"/><use href="#g23" x="66" y="70"/><use href="#g23" x="78" y="70"/><use href="#g17" x="84" y="70"/><use href="#g11" x="240" y="70"/><use href="#g35" x="246" y="70"/><use href="#g8" x="252" y="70"/><use href="#g10" x="288" y="70"/><use href="#g27" x="294" y="70"/><use href="#g43" x="300" y="70"/><use href="#g23" x="312" y="70"/><use href="#g17" x="318" y="70"/><use href="#g31" x="324" y="70"/><use href="#g23" x="0" y="80"/><use href="#g23" x="6" y="80"/><use href="#g23" x="12" y="80"/><use href="#g23" x="18" y="80"/><use href="#g23" x="24" y="80"/><use href="#g22" x="30" y="80"/><use href="#g65" x="36" y="80"/><use href="#g24" x="42" y="80"/><use href="#g42" x="48" y="80"/><use href="#g17" x="60" y="80"/><use href="#g17" x="66" y="80"/><use href="#g1" x="240" y="80"/><use href="#g29" x="246" y="80"/><use href="#g35" x="252" y="80"/><use href="#g1" x="258" y="80"/><use href="#g48" x="264" y="80"/><use href="#g23" x="0" y="90"/><use href="#g23" x="6" y="90"/><use href="#g23" x="12" y="90"/><use href="#g23" x="18" y="90"/><use href="#g23" x="24" y="90"/><use href="#g22" x="30" y="90"/><use href="#g65" x="36" y="90"/><use href="#g65" x="42" y="90"/><use href="#g42" x="48" y="90"/><use href="#g58" x="60" y="90"/><use href="#g23" x="66" y="90"/><use href="#g62" x="78" y="90"/><use href="#g28" x="84" y="90"/><use href="#g26" x="96" y="90"/><use href="#g26" x="102" y="90"/><use href="#g4" x="240" y="90"/><use href="#g11" x="246" y="90"/><use href="#g38" x="252" y="90"/><use href="#g48" x="288" y="90"/><use href="#g2" x="294" y="90"/><use href="#g29" x="300" y="90"/><use href="#g7" x="306" y="90"/><use href="#g44" x="318" y="90"/><use href="#g7" x="324" y="90"/><use href="#g1" x="330" y="90"/><use href="#g5" x="336" y="90"/><use href="#g45" x="342" y="90"/><use href="#g43" x="348" y="90"/><use href="#g23" x="360" y="90"/><use href="#g26" x="366" y="90"/><use href="#g26" x="372" y="90"/><use href="#g31" x="378" y="90"/><use href="#g23" x="0" y="100"/><use href="#g23" x="6" y="100"/><use href="#g23" x="12" y="100"/><use href="#g23" x="18" y="100"/><use href="#g23" x="24" y="100"/><use href="#g22" x="30" y="100"/><use href="#g65" x="36" y="100"/><use href="#g17" x="42" y="100"/><use href="#g42" x="48" y="100"/><use href="#g65" x="60" y="100"/><use href="#g60" x="66" y="100"/><use href="#g26" x="78" y="100"/><use href="#g62" x="84" y="100"/><use href="#g54" x="240" y="100"/><use href="#g34" x="246" y="100"/><use href="#g63" x="252" y="100"/><use href="#g22" x="288" y="100"/><use href="#g24" x="294" y="100"/><use href="#g26" x="300" y="100"/><use href="#g31" x="306" y="100"/><use href="#g23" x="0" y="110"/><use href="#g23" x="6" y="110"/><use href="#g23" x="12" y="110"/><use href="#g23" x="18" y="110"/><use href="#g23" x="24" y="110"/><use href="#g22" x="30" y="110"/><use href="#g65" x="36" y="110"/><use href="#g51" x="42" y="110"/><use href="#g42" x="48" y="110"/><use href="#g58" x="60" y="110"/><use href="#g46" x="66" y="110"/><use href="#g62" x="78" y="110"/><use href="#g18" x="84" y="110"/><use href="#g65" x="96" y="110"/><use href="#g22" x="102" y="110"/><use href="#g56" x="114" y="110"/><use href="#g28" x="120" y="110"/><use href="#g23" x="132" y="110"/><use href="#g23" x="138" y="110"/><use href="#g23" x="150" y="110"/><use href="#g23" x="156" y="110"/><use href="#g11" x="240" y="110"/><use href="#g35" x="246" y="110"/><use href="#g8" x="252" y="110"/><use href="#g44" x="288" y="110"/><use href="#g56" x="294" y="110"/><use href="#g28" x="300" y="110"/><use href="#g65" x="306" y="110"/><use href="#g22" x="312" y="110"/><use href="#g31" x="318" y="110"/><use href="#g45" x="324" y="110"/><use href="#g43" x="330" y="110"/><use href="#g7" x="342" y="110"/><use href="#g6" x="348" y="110"/><use href="#g5" x="354" y="110"/><use href="#g23" x="0" y="120"/><use href="#g23" x="6" y="120"/><use href="#g23" x="12" y="120"/><use href="#g23" x="18" y="120"/><use href="#g23" x="24" y="120"/><use href="#g22" x="30" y="120"/><use href="#g58" x="36" y="120"/><use href="#g56" x="42" y="120"/><use href="#g42" x="48" y="120"/><use href="#g62" x="60" y="120"/><use href="#g55" x="66" y="120"/><use href="#g26" x="78" y="120"/><use href="#g26" x="84" y="120"/><use href="#g41" x="240" y="120"/><use href="#g35" x="246" y="120"/><use href="#g30" x="252" y="120"/><use href="#g7" x="288" y="120"/><use href="#g6" x="294" y="120"/><use href="#g5" x="300" y="120"/><use href="#g43" x="306" y="120"/><use href="#g7" x="318" y="120"/><use href="#g6" x="324" y="120"/><use href="#g5" x="330" y="120"/><use href="#g23" x="0" y="130"/><use href="#g23" x="6" y="130"/><use href="#g23" x="12" y="130"/><use href="#g23" x="18" y="130"/><use href="#g23" x="24" y="130"/><use href="#g22" x="30" y="130"/><use href="#g58" x="36" y="130"/><use href="#g22" x="42" y="130"/><use href="#g42" x="48" y="130"/><use href="#g51" x="60" y="130"/><use href="#g62" x="66" y="130"/><use href="#g30" x="240" y="130"/><use href="#g7" x="246" y="130"/><use href="#g29" x="252" y="130"/><use href="#g23" x="0" y="140"/><use href="#g23" x="6" y="140"/><use href="#g23" x="12" y="140"/><use href="#g23" x="18" y="140"/><use href="#g23" x="24" y="140"/><use href="#g22" x="30" y="140"/><use href="#g58" x="36" y="140"/><use href="#g60" x="42" y="140"/><use href="#g42" x="48" y="140"/><use href="#g28" x="60" y="140"/><use href="#g58" x="66" y="140"/><use href="#g51" x="78" y="140"/><use href="#g46" x="84" y="140"/><use href="#g26" x="96" y="140"/><use href="#g26" x="102" y="140"/><use href="#g26" x="114" y="140"/><use href="#g26" x="120" y="140"/><use href="#g26" x="132" y="140"/><use href="#g26" x="138" y="140"/><use href="#g4" x="240" y="140"/><use href="#g10" x="246" y="140"/><use href="#g27" x="252" y="140"/><use href="#g27" x="258" y="140"/><use href="#g22" x="288" y="140"/><use href="#g60" x="294" y="140"/><use href="#g62" x="300" y="140"/><use href="#g31" x="306" y="140"/><use href="#g23" x="0" y="150"/><use href="#g23" x="6" y="150"/><use href="#g23" x="12" y="150"/><use href="#g23" x="18" y="150"/><use href="#g23" x="24" y="150"/><use href="#g22" x="30" y="150"/><use href="#g58" x="36" y="150"/><use href="#g17" x="42" y="150"/><use href="#g42" x="48" y="150"/><use href="#g51" x="60" y="150"/><use href="#g24" x="66" y="150"/><use href="#g23" x="78" y="150"/><use href="#g60" x="84" y="150"/><use href="#g62" x="96" y="150"/><use href="#g60" x="102" y="150"/><use href="#g56" x="114" y="150"/><use href="#g28" x="120" y="150"/><use href="#g23" x="132" y="150"/><use href="#g23" x="138" y="150"/><use href="#g23" x="150" y="150"/><use href="#g23" x="156" y="150"/><use href="#g23" x="168" y="150"/><use href="#g23" x="174" y="150"/><use href="#g11" x="240" y="150"/><use href="#g35" x="246" y="150"/><use href="#g8" x="252" y="150"/><use href="#g48" x="288" y="150"/><use href="#g2" x="294" y="150"/><use href="#g29" x="300" y="150"/><use href="#g7" x="306" y="150"/><use href="#g44" x="318" y="150"/><use href="#g56" x="324" y="150"/><use href="#g28" x="330" y="150"/><use href="#g62" x="336" y="150"/><use href="#g60" x="342" y="150"/><use href="#g31" x="348" y="150"/><use href="#g45" x="354" y="150"/><use href="#g43" x="360" y="150"/><use href="#g23" x="372" y="150"/></g><g fill="#000" transform="translate(309 399)"><use href="#g61" x="0"/><use href="#g36" x="12"/><use href="#g18" x="0" y="10"/><use href="#g7" x="6" y="10"/><use href="#g48" x="12" y="10"/><use href="#g33" x="18" y="10"/><use href="#g36" x="24" y="10"/><use href="#g36" x="30" y="10"/><use href="#g7" x="36" y="10"/><use href="#g6" x="42" y="10"/><use href="#g38" x="54" y="10"/><use href="#g30" x="60" y="10"/><use href="#g35" x="66" y="10"/><use href="#g36" x="72" y="10"/><use href="#g30" x="78" y="10"/><use href="#g10" x="84" y="10"/><use href="#g11" x="90" y="10"/><use href="#g4" x="102" y="10"/><use href="#g10" x="108" y="10"/><use href="#g33" x="114" y="10"/><use href="#g1" x="120" y="10"/><use href="#g7" x="126" y="10"/><use href="#g6" x="132" y="10"/><use href="#g10" x="144" y="10"/><use href="#g34" x="150" y="10"/><use href="#g7" x="162" y="10"/><use href="#g41" x="168" y="10"/><use href="#g4" x="174" y="10"/><use href="#g7" x="180" y="10"/><use href="#g38" x="186" y="10"/><use href="#g29" x="192" y="10"/><use href="#g5" x="198" y="10"/><use href="#g35" x="204" y="10"/><use href="#g34" x="210" y="10"/><use href="#g23" x="222" y="10"/><use href="#g28" x="228" y="10"/><use href="#g9" x="234" y="10"/><use href="#g19" x="246" y="10"/><use href="#g33" x="252" y="10"/><use href="#g1" x="258" y="10"/><use href="#g38" x="264" y="10"/><use href="#g7" x="270" y="10"/><use href="#g34" x="276" y="10"/><use href="#g6" x="282" y="10"/><use href="#g7" x="288" y="10"/><use href="#g6" x="294" y="10"/><use href="#g61" x="0" y="20"/><use href="#g30" x="12" y="20"/><use href="#g7" x="18" y="20"/><use href="#g27" x="24" y="20"/><use href="#g35" x="30" y="20"/><use href="#g10" x="36" y="20"/><use href="#g6" x="42" y="20"/><use href="#g3" x="0" y="30"/><use href="#g30" x="6" y="30"/><use href="#g35" x="12" y="30"/><use href="#g36" x="18" y="30"/><use href="#g30" x="24" y="30"/><use href="#g10" x="30" y="30"/><use href="#g11" x="36" y="30"/><use href="#g29" x="48" y="30"/><use href="#g7" x="54" y="30"/><use href="#g30" x="60" y="30"/><use href="#g11" x="66" y="30"/><use href="#g5" x="72" y="30"/><use href="#g34" x="78" y="30"/><use href="#g10" x="84" y="30"/><use href="#g29" x="90" y="30"/><use href="#g7" x="96" y="30"/><use href="#g6" x="102" y="30"/><use href="#g9" x="108" y="30"/><use href="#g3" x="0" y="40"/><use href="#g30" x="6" y="40"/><use href="#g35" x="12" y="40"/><use href="#g36" x="18" y="40"/><use href="#g30" x="24" y="40"/><use href="#g10" x="30" y="40"/><use href="#g11" x="36" y="40"/><use href="#g27" x="48" y="40"/><use href="#g35" x="54" y="40"/><use href="#g10" x="60" y="40"/><use href="#g6" x="66" y="40"/><use href="#g7" x="72" y="40"/><use href="#g6" x="78" y="40"/><use href="#g1" x="90" y="40"/><use href="#g33" x="96" y="40"/><use href="#g4" x="102" y="40"/><use href="#g4" x="108" y="40"/><use href="#g7" x="114" y="40"/><use href="#g1" x="120" y="40"/><use href="#g1" x="126" y="40"/><use href="#g49" x="132" y="40"/><use href="#g33" x="138" y="40"/><use href="#g27" x="144" y="40"/><use href="#g27" x="150" y="40"/><use href="#g2" x="156" y="40"/><use href="#g84" x="162" y="40"/><use href="#g3" x="174" y="40"/><use href="#g14" x="180" y="40"/><use href="#g18" x="186" y="40"/><use href="#g67" x="192" y="40"/><use href="#g23" x="198" y="40"/><use href="#g23" x="204" y="40"/><use href="#g68" x="210" y="40"/><use href="#g56" x="216" y="40"/><use href="#g9" x="222" y="40"/><use href="#g73" x="234" y="40"/><use href="#g1" x="240" y="40"/><use href="#g7" x="246" y="40"/><use href="#g85" x="258" y="40"/><use href="#g36" x="264" y="40"/><use href="#g85" x="270" y="40"/><use href="#g29" x="282" y="40"/><use href="#g35" x="288" y="40"/><use href="#g30" x="300" y="40"/><use href="#g33" x="306" y="40"/><use href="#g34" x="312" y="40"/><use href="#g9" x="318" y="40"/><use href="#g61" x="0" y="50"/><use href="#g36" x="12" y="50"/><use href="#g18" x="0" y="60"/><use href="#g7" x="6" y="60"/><use href="#g48" x="12" y="60"/><use href="#g33" x="18" y="60"/><use href="#g36" x="24" y="60"/><use href="#g36" x="30" y="60"/><use href="#g7" x="36" y="60"/><use href="#g6" x="42" y="60"/><use href="#g38" x="54" y="60"/><use href="#g30" x="60" y="60"/><use href="#g35" x="66" y="60"/><use href="#g36" x="72" y="60"/><use href="#g30" x="78" y="60"/><use href="#g10" x="84" y="60"/><use href="#g11" x="90" y="60"/><use href="#g4" x="102" y="60"/><use href="#g10" x="108" y="60"/><use href="#g33" x="114" y="60"/><use href="#g1" x="120" y="60"/><use href="#g7" x="126" y="60"/><use href="#g6" x="132" y="60"/><use href="#g10" x="144" y="60"/><use href="#g34" x="150" y="60"/><use href="#g7" x="162" y="60"/><use href="#g41" x="168" y="60"/><use href="#g4" x="174" y="60"/><use href="#g7" x="180" y="60"/><use href="#g38" x="186" y="60"/><use href="#g29" x="192" y="60"/><use href="#g5" x="198" y="60"/><use href="#g35" x="204" y="60"/><use href="#g34" x="210" y="60"/><use href="#g23" x="222" y="60"/><use href="#g28" x="228" y="60"/><use href="#g9" x="234" y="60"/><use href="#g19" x="246" y="60"/><use href="#g33" x="252" y="60"/><use href="#g1" x="258" y="60"/><use href="#g38" x="264" y="60"/><use href="#g7" x="270" y="60"/><use href="#g34" x="276" y="60"/><use href="#g6" x="282" y="60"/><use href="#g7" x="288" y="60"/><use href="#g6" x="294" y="60"/><use href="#g3" x="0" y="70"/><use href="#g30" x="6" y="70"/><use href="#g35" x="12" y="70"/><use href="#g36" x="18" y="70"/><use href="#g30" x="24" y="70"/><use href="#g10" x="30" y="70"/><use href="#g11" x="36" y="70"/><use href="#g29" x="48" y="70"/><use href="#g7" x="54" y="70"/><use href="#g30" x="60" y="70"/><use href="#g11" x="66" y="70"/><use href="#g5" x="72" y="70"/><use href="#g34" x="78" y="70"/><use href="#g10" x="84" y="70"/><use href="#g29" x="90" y="70"/><use href="#g7" x="96" y="70"/><use href="#g6" x="102" y="70"/><use href="#g9" x="108" y="70"/><use href="#g61" x="0" y="80"/><use href="#g30" x="12" y="80"/><use href="#g7" x="18" y="80"/><use href="#g27" x="24" y="80"/><use href="#g35" x="30" y="80"/><use href="#g10" x="36" y="80"/><use href="#g6" x="42" y="80"/><use href="#g3" x="0" y="90"/><use href="#g30" x="6" y="90"/><use href="#g35" x="12" y="90"/><use href="#g36" x="18" y="90"/><use href="#g30" x="24" y="90"/><use href="#g10" x="30" y="90"/><use href="#g11" x="36" y="90"/><use href="#g27" x="48" y="90"/><use href="#g35" x="54" y="90"/><use href="#g10" x="60" y="90"/><use href="#g6" x="66" y="90"/><use href="#g7" x="72" y="90"/><use href="#g6" x="78" y="90"/><use href="#g1" x="90" y="90"/><use href="#g33" x="96" y="90"/><use href="#g4" x="102" y="90"/><use href="#g4" x="108" y="90"/><use href="#g7" x="114" y="90"/><use href="#g1" x="120" y="90"/><use href="#g1" x="126" y="90"/><use href="#g49" x="132" y="90"/><use href="#g33" x="138" y="90"/><use href="#g27" x="144" y="90"/><use href="#g27" x="150" y="90"/><use href="#g2" x="156" y="90"/><use href="#g84" x="162" y="90"/><use href="#g3" x="174" y="90"/><use href="#g14" x="180" y="90"/><use href="#g18" x="186" y="90"/><use href="#g67" x="192" y="90"/><use href="#g23" x="198" y="90"/><use href="#g23" x="204" y="90"/><use href="#g68" x="210" y="90"/><use href="#g65" x="216" y="90"/><use href="#g9" x="222" y="90"/><use href="#g73" x="234" y="90"/><use href="#g1" x="240" y="90"/><use href="#g7" x="246" y="90"/><use href="#g85" x="258" y="90"/><use href="#g36" x="264" y="90"/><use href="#g85" x="270" y="90"/><use href="#g29" x="282" y="90"/><use href="#g35" x="288" y="90"/><use href="#g30" x="300" y="90"/><use href="#g33" x="306" y="90"/><use href="#g34" x="312" y="90"/><use href="#g9" x="318" y="90"/><use href="#g61" x="0" y="100"/><use href="#g36" x="12" y="100"/><use href="#g18" x="0" y="110"/><use href="#g7" x="6" y="110"/><use href="#g48" x="12" y="110"/><use href="#g33" x="18" y="110"/><use href="#g36" x="24" y="110"/><use href="#g36" x="30" y="110"/><use href="#g7" x="36" y="110"/><use href="#g6" x="42" y="110"/><use href="#g38" x="54" y="110"/><use href="#g30" x="60" y="110"/><use href="#g35" x="66" y="110"/><use href="#g36" x="72" y="110"/><use href="#g30" x="78" y="110"/><use href="#g10" x="84" y="110"/><use href="#g11" x="90" y="110"/><use href="#g4" x="102" y="110"/><use href="#g10" x="108" y="110"/><use href="#g33" x="114" y="110"/><use href="#g1" x="120" y="110"/><use href="#g7" x="126" y="110"/><use href="#g6" x="132" y="110"/><use href="#g10" x="144" y="110"/><use href="#g34" x="150" y="110"/><use href="#g7" x="162" y="110"/><use href="#g41" x="168" y="110"/><use href="#g4" x="174" y="110"/><use href="#g7" x="180" y="110"/><use href="#g38" x="186" y="110"/><use href="#g29" x="192" y="110"/><use href="#g5" x="198" y="110"/><use href="#g35" x="204" y="110"/><use href="#g34" x="210" y="110"/><use href="#g23" x="222" y="110"/><use href="#g28" x="228" y="110"/><use href="#g9" x="234" y="110"/><use href="#g19" x="246" y="110"/><use href="#g33" x="252" y="110"/><use href="#g1" x="258" y="110"/><use href="#g38" x="264" y="110"/><use href="#g7" x="270" y="110"/><use href="#g34" x="276" y="110"/><use href="#g6" x="282" y="110"/><use href="#g7" x="288" y="110"/><use href="#g6" x="294" y="110"/></g></svg>
</body></html>
